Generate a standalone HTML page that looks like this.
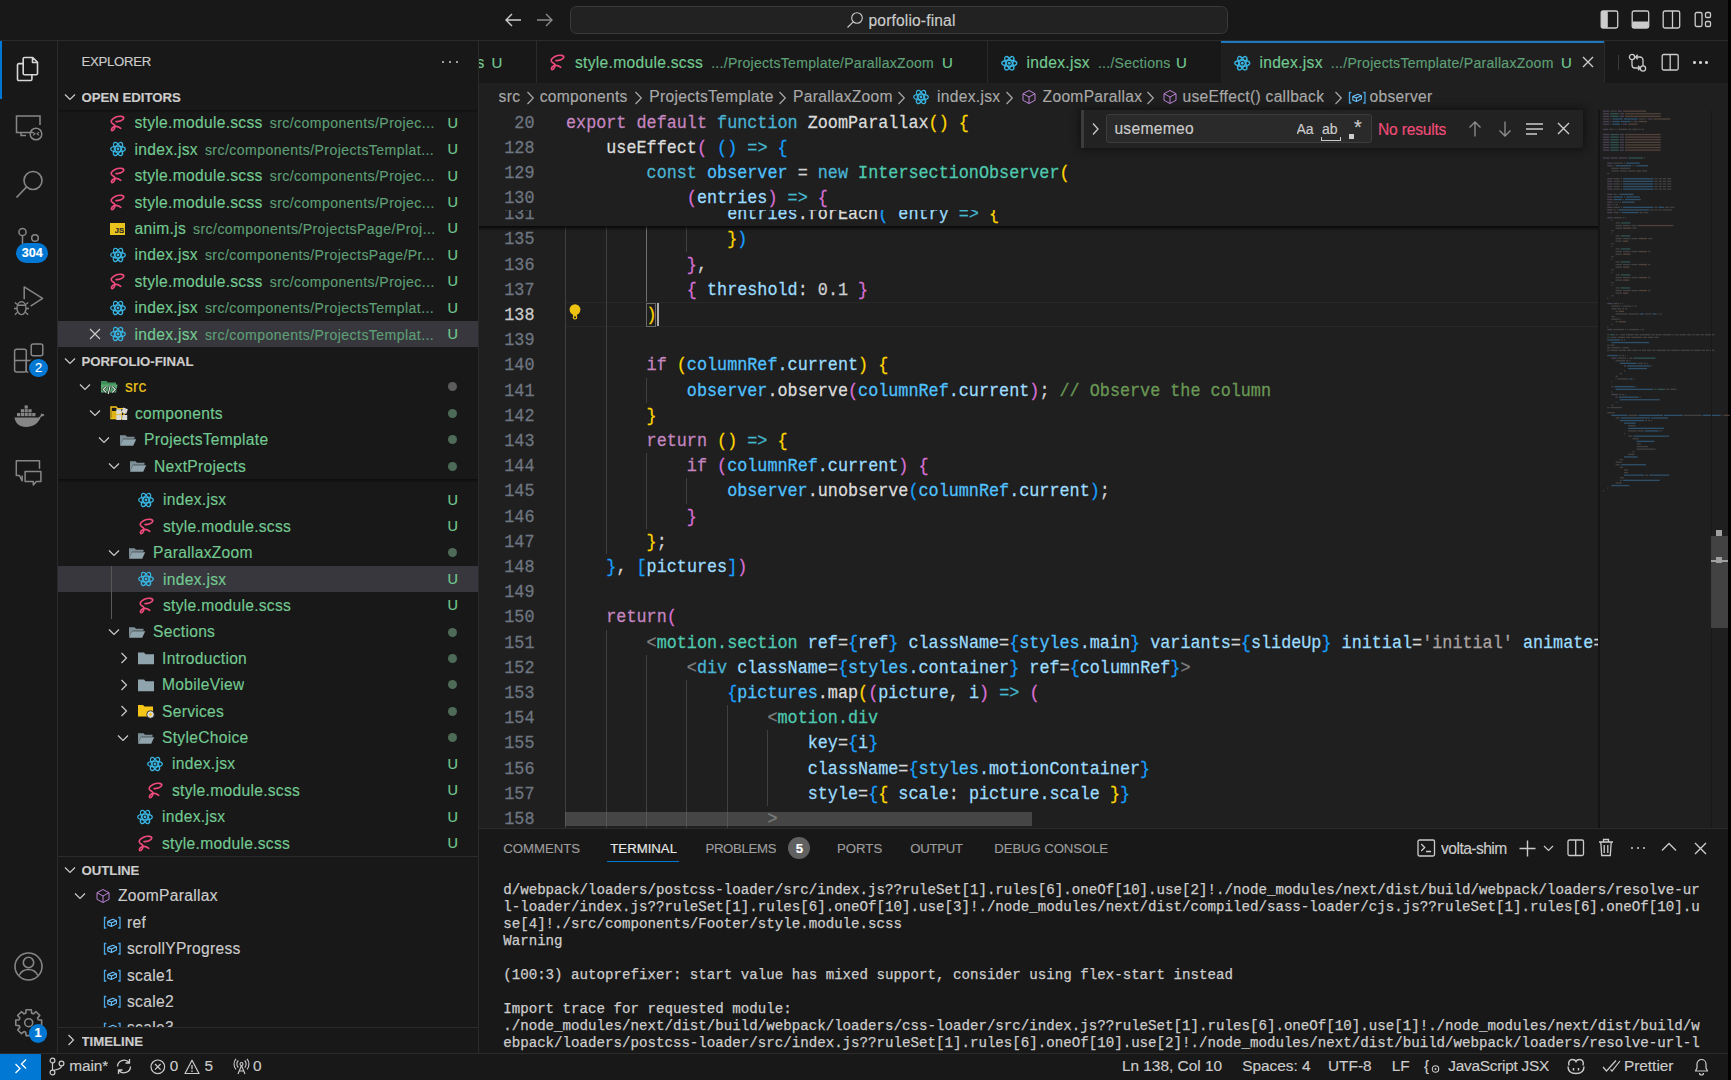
<!DOCTYPE html><html><head><meta charset="utf-8"><style>
*{margin:0;padding:0;box-sizing:border-box}
html,body{width:1731px;height:1080px;overflow:hidden;background:#181818}
body{position:relative;font-family:"Liberation Sans", sans-serif;color:#cccccc;font-size:15.6px;-webkit-text-stroke:0.15px currentColor}
.a{position:absolute}
.r{position:absolute;white-space:pre;overflow:hidden}
svg{position:absolute;overflow:visible;fill:none}
.m{font-family:"Liberation Mono", monospace;-webkit-text-stroke:0.25px currentColor}
</style></head><body>
<div class="a" style="left:0px;top:0px;width:1731px;height:41px;background:#181818;border-bottom:1px solid #2b2b2b"></div>
<div class="a" style="left:0px;top:41px;width:58px;height:1012px;background:#181818;border-right:1px solid #2b2b2b"></div>
<div class="a" style="left:58px;top:41px;width:421px;height:1012px;background:#181818;border-right:1px solid #2b2b2b"></div>
<div class="a" style="left:479px;top:41px;width:1249px;height:42px;background:#181818"></div>
<div class="a" style="left:479px;top:83px;width:1249px;height:745px;background:#1f1f1f"></div>
<div class="a" style="left:479px;top:828px;width:1249px;height:225px;background:#181818;border-top:1px solid #2b2b2b"></div>
<div class="a" style="left:0px;top:1053px;width:1728px;height:27px;background:#181818;border-top:1px solid #2b2b2b"></div>
<div class="a" style="left:1728px;top:0px;width:3px;height:1080px;background:#000"></div>
<div class="r" style="left:81.5px;top:41.3px;height:42px;line-height:42px;font-size:13.2px;color:#cccccc;letter-spacing:-0.3px">EXPLORER</div>
<div class="a" style="left:441.8px;top:61px;width:2.4px;height:2.4px;background:#cccccc;border-radius:50%"></div>
<div class="a" style="left:448.8px;top:61px;width:2.4px;height:2.4px;background:#cccccc;border-radius:50%"></div>
<div class="a" style="left:455.8px;top:61px;width:2.4px;height:2.4px;background:#cccccc;border-radius:50%"></div>
<svg style="left:64px;top:92.5px" width="12" height="8" viewBox="0 0 12 8"><path d="M1 1.5l5 5 5-5" stroke="#cccccc" stroke-width="1.2" fill="none"/></svg>
<div class="r" style="left:81.5px;top:85.3px;height:26.4px;line-height:26.4px;font-size:13.2px;color:#cccccc;font-weight:bold">OPEN EDITORS</div>
<svg style="left:110.0px;top:114.6px" width="15" height="17" viewBox="0 0 15 17"><path d="M6 6.6C9 6.8 13.5 5.5 13.8 3.2 14 1.2 10 .8 7.5 1.6 4 2.6.8 5 1.2 6.8 1.6 8.6 4.8 9.4 5 11 5.2 12.8 3.5 15.8 2 15.6.8 15.4 1.5 13 3.5 12 5.5 11 8.5 11.5 10.8 13.3" stroke="#ee4a7c" stroke-width="1.6" fill="none" stroke-linecap="round"/></svg>
<div class="r" style="left:134.5px;top:110.29999999999998px;height:26.4px;line-height:26.4px;width:310px;letter-spacing:0.3px"><span style="color:#73c991">style.module.scss</span><span style="color:#5e9f76;font-size:14.04px;margin-left:7px;letter-spacing:0.45px">src/components/Projec...</span></div>
<div class="r" style="left:447.5px;top:109.69999999999999px;height:26.4px;line-height:26.4px;font-size:14.5px;color:#73c991;">U</div>
<svg style="left:109.5px;top:141.29999999999998px" width="16" height="16" viewBox="0 0 16 16"><g stroke="#38b3e0" stroke-width="1.3" fill="none"><ellipse cx="8" cy="8" rx="7.3" ry="2.9"/><ellipse cx="8" cy="8" rx="7.3" ry="2.9" transform="rotate(60 8 8)"/><ellipse cx="8" cy="8" rx="7.3" ry="2.9" transform="rotate(120 8 8)"/></g><circle cx="8" cy="8" r="1.4" fill="#38b3e0"/></svg>
<div class="r" style="left:134.5px;top:136.7px;height:26.4px;line-height:26.4px;width:310px;letter-spacing:0.3px"><span style="color:#73c991">index.jsx</span><span style="color:#5e9f76;font-size:14.04px;margin-left:7px;letter-spacing:0.45px">src/components/ProjectsTemplat...</span></div>
<div class="r" style="left:447.5px;top:136.1px;height:26.4px;line-height:26.4px;font-size:14.5px;color:#73c991;">U</div>
<svg style="left:110.0px;top:167.39999999999998px" width="15" height="17" viewBox="0 0 15 17"><path d="M6 6.6C9 6.8 13.5 5.5 13.8 3.2 14 1.2 10 .8 7.5 1.6 4 2.6.8 5 1.2 6.8 1.6 8.6 4.8 9.4 5 11 5.2 12.8 3.5 15.8 2 15.6.8 15.4 1.5 13 3.5 12 5.5 11 8.5 11.5 10.8 13.3" stroke="#ee4a7c" stroke-width="1.6" fill="none" stroke-linecap="round"/></svg>
<div class="r" style="left:134.5px;top:163.1px;height:26.4px;line-height:26.4px;width:310px;letter-spacing:0.3px"><span style="color:#73c991">style.module.scss</span><span style="color:#5e9f76;font-size:14.04px;margin-left:7px;letter-spacing:0.45px">src/components/Projec...</span></div>
<div class="r" style="left:447.5px;top:162.5px;height:26.4px;line-height:26.4px;font-size:14.5px;color:#73c991;">U</div>
<svg style="left:110.0px;top:193.79999999999998px" width="15" height="17" viewBox="0 0 15 17"><path d="M6 6.6C9 6.8 13.5 5.5 13.8 3.2 14 1.2 10 .8 7.5 1.6 4 2.6.8 5 1.2 6.8 1.6 8.6 4.8 9.4 5 11 5.2 12.8 3.5 15.8 2 15.6.8 15.4 1.5 13 3.5 12 5.5 11 8.5 11.5 10.8 13.3" stroke="#ee4a7c" stroke-width="1.6" fill="none" stroke-linecap="round"/></svg>
<div class="r" style="left:134.5px;top:189.5px;height:26.4px;line-height:26.4px;width:310px;letter-spacing:0.3px"><span style="color:#73c991">style.module.scss</span><span style="color:#5e9f76;font-size:14.04px;margin-left:7px;letter-spacing:0.45px">src/components/Projec...</span></div>
<div class="r" style="left:447.5px;top:188.9px;height:26.4px;line-height:26.4px;font-size:14.5px;color:#73c991;">U</div>
<div class="a" style="left:109.5px;top:223.0px;width:15px;height:12px;background:#e8c31c"></div>
<div class="r" style="left:114.5px;top:226.0px;height:9px;line-height:9px;font-size:8px;font-weight:bold;color:#2a2a2a">JS</div>
<div class="r" style="left:134.5px;top:215.9px;height:26.4px;line-height:26.4px;width:310px;letter-spacing:0.3px"><span style="color:#73c991">anim.js</span><span style="color:#5e9f76;font-size:14.04px;margin-left:7px;letter-spacing:0.45px">src/components/ProjectsPage/Proj...</span></div>
<div class="r" style="left:447.5px;top:215.3px;height:26.4px;line-height:26.4px;font-size:14.5px;color:#73c991;">U</div>
<svg style="left:109.5px;top:246.9px" width="16" height="16" viewBox="0 0 16 16"><g stroke="#38b3e0" stroke-width="1.3" fill="none"><ellipse cx="8" cy="8" rx="7.3" ry="2.9"/><ellipse cx="8" cy="8" rx="7.3" ry="2.9" transform="rotate(60 8 8)"/><ellipse cx="8" cy="8" rx="7.3" ry="2.9" transform="rotate(120 8 8)"/></g><circle cx="8" cy="8" r="1.4" fill="#38b3e0"/></svg>
<div class="r" style="left:134.5px;top:242.3px;height:26.4px;line-height:26.4px;width:310px;letter-spacing:0.3px"><span style="color:#73c991">index.jsx</span><span style="color:#5e9f76;font-size:14.04px;margin-left:7px;letter-spacing:0.45px">src/components/ProjectsPage/Pr...</span></div>
<div class="r" style="left:447.5px;top:241.70000000000002px;height:26.4px;line-height:26.4px;font-size:14.5px;color:#73c991;">U</div>
<svg style="left:110.0px;top:273.0px" width="15" height="17" viewBox="0 0 15 17"><path d="M6 6.6C9 6.8 13.5 5.5 13.8 3.2 14 1.2 10 .8 7.5 1.6 4 2.6.8 5 1.2 6.8 1.6 8.6 4.8 9.4 5 11 5.2 12.8 3.5 15.8 2 15.6.8 15.4 1.5 13 3.5 12 5.5 11 8.5 11.5 10.8 13.3" stroke="#ee4a7c" stroke-width="1.6" fill="none" stroke-linecap="round"/></svg>
<div class="r" style="left:134.5px;top:268.70000000000005px;height:26.4px;line-height:26.4px;width:310px;letter-spacing:0.3px"><span style="color:#73c991">style.module.scss</span><span style="color:#5e9f76;font-size:14.04px;margin-left:7px;letter-spacing:0.45px">src/components/Projec...</span></div>
<div class="r" style="left:447.5px;top:268.1px;height:26.4px;line-height:26.4px;font-size:14.5px;color:#73c991;">U</div>
<svg style="left:109.5px;top:299.7px" width="16" height="16" viewBox="0 0 16 16"><g stroke="#38b3e0" stroke-width="1.3" fill="none"><ellipse cx="8" cy="8" rx="7.3" ry="2.9"/><ellipse cx="8" cy="8" rx="7.3" ry="2.9" transform="rotate(60 8 8)"/><ellipse cx="8" cy="8" rx="7.3" ry="2.9" transform="rotate(120 8 8)"/></g><circle cx="8" cy="8" r="1.4" fill="#38b3e0"/></svg>
<div class="r" style="left:134.5px;top:295.1px;height:26.4px;line-height:26.4px;width:310px;letter-spacing:0.3px"><span style="color:#73c991">index.jsx</span><span style="color:#5e9f76;font-size:14.04px;margin-left:7px;letter-spacing:0.45px">src/components/ProjectsTemplat...</span></div>
<div class="r" style="left:447.5px;top:294.5px;height:26.4px;line-height:26.4px;font-size:14.5px;color:#73c991;">U</div>
<div class="a" style="left:58px;top:320.9px;width:420px;height:26.4px;background:#37373d"></div>
<svg style="left:89px;top:328.09999999999997px" width="12" height="12" viewBox="0 0 12 12"><path d="M1 1l10 10M11 1L1 11" stroke="#cccccc" stroke-width="1.2"/></svg>
<svg style="left:109.5px;top:326.09999999999997px" width="16" height="16" viewBox="0 0 16 16"><g stroke="#38b3e0" stroke-width="1.3" fill="none"><ellipse cx="8" cy="8" rx="7.3" ry="2.9"/><ellipse cx="8" cy="8" rx="7.3" ry="2.9" transform="rotate(60 8 8)"/><ellipse cx="8" cy="8" rx="7.3" ry="2.9" transform="rotate(120 8 8)"/></g><circle cx="8" cy="8" r="1.4" fill="#38b3e0"/></svg>
<div class="r" style="left:134.5px;top:321.5px;height:26.4px;line-height:26.4px;width:310px;letter-spacing:0.3px"><span style="color:#73c991">index.jsx</span><span style="color:#5e9f76;font-size:14.04px;margin-left:7px;letter-spacing:0.45px">src/components/ProjectsTemplat...</span></div>
<div class="r" style="left:447.5px;top:320.9px;height:26.4px;line-height:26.4px;font-size:14.5px;color:#73c991;">U</div>
<svg style="left:64px;top:356.49999999999994px" width="12" height="8" viewBox="0 0 12 8"><path d="M1 1.5l5 5 5-5" stroke="#cccccc" stroke-width="1.2" fill="none"/></svg>
<div class="r" style="left:81.5px;top:349.29999999999995px;height:26.4px;line-height:26.4px;font-size:13.2px;color:#cccccc;font-weight:bold">PORFOLIO-FINAL</div>
<svg style="left:79px;top:382.8999999999999px" width="12" height="8" viewBox="0 0 12 8"><path d="M1 1.5l5 5 5-5" stroke="#cccccc" stroke-width="1.2" fill="none"/></svg>
<svg style="left:99.5px;top:380.3999999999999px" width="19" height="15" viewBox="0 0 19 15"><path d="M1 1h5.5l1.5 1.6H16v3H1z" fill="#3f8f5a"/><path d="M1 4.5h16.5L16 12.5H1z" fill="#5aaa72"/><path d="M6.3 6.5L3.2 9.5l3.1 3M12.2 6.5l3.1 3-3.1 3M10.2 5.5L8.2 14" stroke="#181818" stroke-width="2.4" fill="none"/><path d="M6.3 6.5L3.2 9.5l3.1 3M12.2 6.5l3.1 3-3.1 3M10.2 5.5L8.2 14" stroke="#d6eedd" stroke-width="1.1" fill="none"/></svg>
<div class="r" style="left:125px;top:374.29999999999995px;height:26.4px;line-height:26.4px;font-size:15.6px;color:#ecc21a;letter-spacing:0.3px">src</div>
<div class="a" style="left:447.5px;top:382.3999999999999px;width:9px;height:9px;background:#5c5c5c;border-radius:50%"></div>
<svg style="left:89px;top:409.2999999999999px" width="12" height="8" viewBox="0 0 12 8"><path d="M1 1.5l5 5 5-5" stroke="#cccccc" stroke-width="1.2" fill="none"/></svg>
<svg style="left:109.5px;top:406.2999999999999px" width="19" height="15" viewBox="0 0 19 15"><path d="M1 1h5l1.5 1.6H14v10H1z" fill="none" stroke="#f5c518" stroke-width="1.4"/><path d="M2 5h10v7H2z" fill="#f5c518" opacity=".9"/><rect x="6.3" y="3.2" width="5" height="5" fill="#d9d9d9"/><rect x="12.2" y="2.2" width="5" height="5" fill="#d9d9d9" transform="rotate(20 14.7 4.7)"/><rect x="6.3" y="9" width="5" height="5" fill="#d9d9d9"/><rect x="12.2" y="9" width="5" height="5" fill="#d9d9d9"/></svg>
<div class="r" style="left:135px;top:400.69999999999993px;height:26.4px;line-height:26.4px;font-size:15.6px;color:#73c991;letter-spacing:0.3px">components</div>
<div class="a" style="left:447.5px;top:408.7999999999999px;width:9px;height:9px;background:#4d6b57;border-radius:50%"></div>
<svg style="left:98px;top:435.6999999999999px" width="12" height="8" viewBox="0 0 12 8"><path d="M1 1.5l5 5 5-5" stroke="#cccccc" stroke-width="1.2" fill="none"/></svg>
<svg style="left:119px;top:432.6999999999999px" width="18" height="14" viewBox="0 0 18 14"><path d="M1 2.2h5.5l1.5 1.6h7.5v2H4.2L1 12.5z" fill="#90a4ae" opacity=".85"/><path d="M4 6.2h13.2l-3 6.6H1z" fill="#90a4ae"/></svg>
<div class="r" style="left:144px;top:427.0999999999999px;height:26.4px;line-height:26.4px;font-size:15.6px;color:#73c991;letter-spacing:0.3px">ProjectsTemplate</div>
<div class="a" style="left:447.5px;top:435.1999999999999px;width:9px;height:9px;background:#4d6b57;border-radius:50%"></div>
<svg style="left:108px;top:462.09999999999985px" width="12" height="8" viewBox="0 0 12 8"><path d="M1 1.5l5 5 5-5" stroke="#cccccc" stroke-width="1.2" fill="none"/></svg>
<svg style="left:129px;top:459.09999999999985px" width="18" height="14" viewBox="0 0 18 14"><path d="M1 2.2h5.5l1.5 1.6h7.5v2H4.2L1 12.5z" fill="#90a4ae" opacity=".85"/><path d="M4 6.2h13.2l-3 6.6H1z" fill="#90a4ae"/></svg>
<div class="r" style="left:154px;top:453.4999999999999px;height:26.4px;line-height:26.4px;font-size:15.6px;color:#73c991;letter-spacing:0.3px">NextProjects</div>
<div class="a" style="left:447.5px;top:461.59999999999985px;width:9px;height:9px;background:#4d6b57;border-radius:50%"></div>
<div class="a" style="left:58px;top:479px;width:420px;height:4px;background:linear-gradient(#0d0d0d,rgba(24,24,24,0))"></div>
<svg style="left:138px;top:492.0px" width="16" height="16" viewBox="0 0 16 16"><g stroke="#38b3e0" stroke-width="1.3" fill="none"><ellipse cx="8" cy="8" rx="7.3" ry="2.9"/><ellipse cx="8" cy="8" rx="7.3" ry="2.9" transform="rotate(60 8 8)"/><ellipse cx="8" cy="8" rx="7.3" ry="2.9" transform="rotate(120 8 8)"/></g><circle cx="8" cy="8" r="1.4" fill="#38b3e0"/></svg>
<div class="r" style="left:163px;top:487.40000000000003px;height:26.4px;line-height:26.4px;font-size:15.6px;color:#73c991;letter-spacing:0.3px">index.jsx</div>
<div class="r" style="left:447.5px;top:486.8px;height:26.4px;line-height:26.4px;font-size:14.5px;color:#73c991;">U</div>
<svg style="left:138.5px;top:518.1000000000001px" width="15" height="17" viewBox="0 0 15 17"><path d="M6 6.6C9 6.8 13.5 5.5 13.8 3.2 14 1.2 10 .8 7.5 1.6 4 2.6.8 5 1.2 6.8 1.6 8.6 4.8 9.4 5 11 5.2 12.8 3.5 15.8 2 15.6.8 15.4 1.5 13 3.5 12 5.5 11 8.5 11.5 10.8 13.3" stroke="#ee4a7c" stroke-width="1.6" fill="none" stroke-linecap="round"/></svg>
<div class="r" style="left:163px;top:513.8000000000001px;height:26.4px;line-height:26.4px;font-size:15.6px;color:#73c991;letter-spacing:0.3px">style.module.scss</div>
<div class="r" style="left:447.5px;top:513.2px;height:26.4px;line-height:26.4px;font-size:14.5px;color:#73c991;">U</div>
<svg style="left:108px;top:548.8000000000001px" width="12" height="8" viewBox="0 0 12 8"><path d="M1 1.5l5 5 5-5" stroke="#cccccc" stroke-width="1.2" fill="none"/></svg>
<svg style="left:128px;top:545.8000000000001px" width="18" height="14" viewBox="0 0 18 14"><path d="M1 2.2h5.5l1.5 1.6h7.5v2H4.2L1 12.5z" fill="#90a4ae" opacity=".85"/><path d="M4 6.2h13.2l-3 6.6H1z" fill="#90a4ae"/></svg>
<div class="r" style="left:153px;top:540.2px;height:26.4px;line-height:26.4px;font-size:15.6px;color:#73c991;letter-spacing:0.3px">ParallaxZoom</div>
<div class="a" style="left:447.5px;top:548.3000000000001px;width:9px;height:9px;background:#4d6b57;border-radius:50%"></div>
<div class="a" style="left:58px;top:566.0px;width:420px;height:26.4px;background:#37373d"></div>
<svg style="left:138px;top:571.2px" width="16" height="16" viewBox="0 0 16 16"><g stroke="#38b3e0" stroke-width="1.3" fill="none"><ellipse cx="8" cy="8" rx="7.3" ry="2.9"/><ellipse cx="8" cy="8" rx="7.3" ry="2.9" transform="rotate(60 8 8)"/><ellipse cx="8" cy="8" rx="7.3" ry="2.9" transform="rotate(120 8 8)"/></g><circle cx="8" cy="8" r="1.4" fill="#38b3e0"/></svg>
<div class="r" style="left:163px;top:566.6px;height:26.4px;line-height:26.4px;font-size:15.6px;color:#73c991;letter-spacing:0.3px">index.jsx</div>
<div class="r" style="left:447.5px;top:566.0px;height:26.4px;line-height:26.4px;font-size:14.5px;color:#73c991;">U</div>
<svg style="left:138.5px;top:597.3000000000001px" width="15" height="17" viewBox="0 0 15 17"><path d="M6 6.6C9 6.8 13.5 5.5 13.8 3.2 14 1.2 10 .8 7.5 1.6 4 2.6.8 5 1.2 6.8 1.6 8.6 4.8 9.4 5 11 5.2 12.8 3.5 15.8 2 15.6.8 15.4 1.5 13 3.5 12 5.5 11 8.5 11.5 10.8 13.3" stroke="#ee4a7c" stroke-width="1.6" fill="none" stroke-linecap="round"/></svg>
<div class="r" style="left:163px;top:593.0px;height:26.4px;line-height:26.4px;font-size:15.6px;color:#73c991;letter-spacing:0.3px">style.module.scss</div>
<div class="r" style="left:447.5px;top:592.4px;height:26.4px;line-height:26.4px;font-size:14.5px;color:#73c991;">U</div>
<svg style="left:108px;top:628.0px" width="12" height="8" viewBox="0 0 12 8"><path d="M1 1.5l5 5 5-5" stroke="#cccccc" stroke-width="1.2" fill="none"/></svg>
<svg style="left:128px;top:625.0px" width="18" height="14" viewBox="0 0 18 14"><path d="M1 2.2h5.5l1.5 1.6h7.5v2H4.2L1 12.5z" fill="#90a4ae" opacity=".85"/><path d="M4 6.2h13.2l-3 6.6H1z" fill="#90a4ae"/></svg>
<div class="r" style="left:153px;top:619.4px;height:26.4px;line-height:26.4px;font-size:15.6px;color:#73c991;letter-spacing:0.3px">Sections</div>
<div class="a" style="left:447.5px;top:627.5px;width:9px;height:9px;background:#4d6b57;border-radius:50%"></div>
<svg style="left:120px;top:652.4px" width="8" height="12" viewBox="0 0 8 12"><path d="M1.5 1l5 5-5 5" stroke="#cccccc" stroke-width="1.2" fill="none"/></svg>
<svg style="left:137px;top:651.4px" width="18" height="14" viewBox="0 0 18 14"><path d="M1 1.5h6l1.6 1.8H17v10H1z" fill="#90a4ae"/></svg>
<div class="r" style="left:162px;top:645.8px;height:26.4px;line-height:26.4px;font-size:15.6px;color:#73c991;letter-spacing:0.3px">Introduction</div>
<div class="a" style="left:447.5px;top:653.9px;width:9px;height:9px;background:#4d6b57;border-radius:50%"></div>
<svg style="left:120px;top:678.8px" width="8" height="12" viewBox="0 0 8 12"><path d="M1.5 1l5 5-5 5" stroke="#cccccc" stroke-width="1.2" fill="none"/></svg>
<svg style="left:137px;top:677.8px" width="18" height="14" viewBox="0 0 18 14"><path d="M1 1.5h6l1.6 1.8H17v10H1z" fill="#90a4ae"/></svg>
<div class="r" style="left:162px;top:672.1999999999999px;height:26.4px;line-height:26.4px;font-size:15.6px;color:#73c991;letter-spacing:0.3px">MobileView</div>
<div class="a" style="left:447.5px;top:680.3px;width:9px;height:9px;background:#4d6b57;border-radius:50%"></div>
<svg style="left:120px;top:705.1999999999999px" width="8" height="12" viewBox="0 0 8 12"><path d="M1.5 1l5 5-5 5" stroke="#cccccc" stroke-width="1.2" fill="none"/></svg>
<svg style="left:137px;top:704.1999999999999px" width="19" height="15" viewBox="0 0 19 15"><path d="M1 1h5l1.5 1.6H16v10H1z" fill="#f5c518"/><circle cx="13.5" cy="10.5" r="3.8" fill="#d9d9d9" stroke="#181818" stroke-width=".8"/><circle cx="13.5" cy="10.5" r="1.4" fill="#f5c518"/></svg>
<div class="r" style="left:162px;top:698.5999999999999px;height:26.4px;line-height:26.4px;font-size:15.6px;color:#73c991;letter-spacing:0.3px">Services</div>
<div class="a" style="left:447.5px;top:706.6999999999999px;width:9px;height:9px;background:#4d6b57;border-radius:50%"></div>
<svg style="left:117px;top:733.5999999999999px" width="12" height="8" viewBox="0 0 12 8"><path d="M1 1.5l5 5 5-5" stroke="#cccccc" stroke-width="1.2" fill="none"/></svg>
<svg style="left:137px;top:730.5999999999999px" width="18" height="14" viewBox="0 0 18 14"><path d="M1 2.2h5.5l1.5 1.6h7.5v2H4.2L1 12.5z" fill="#90a4ae" opacity=".85"/><path d="M4 6.2h13.2l-3 6.6H1z" fill="#90a4ae"/></svg>
<div class="r" style="left:162px;top:724.9999999999999px;height:26.4px;line-height:26.4px;font-size:15.6px;color:#73c991;letter-spacing:0.3px">StyleChoice</div>
<div class="a" style="left:447.5px;top:733.0999999999999px;width:9px;height:9px;background:#4d6b57;border-radius:50%"></div>
<svg style="left:147px;top:755.9999999999999px" width="16" height="16" viewBox="0 0 16 16"><g stroke="#38b3e0" stroke-width="1.3" fill="none"><ellipse cx="8" cy="8" rx="7.3" ry="2.9"/><ellipse cx="8" cy="8" rx="7.3" ry="2.9" transform="rotate(60 8 8)"/><ellipse cx="8" cy="8" rx="7.3" ry="2.9" transform="rotate(120 8 8)"/></g><circle cx="8" cy="8" r="1.4" fill="#38b3e0"/></svg>
<div class="r" style="left:172px;top:751.3999999999999px;height:26.4px;line-height:26.4px;font-size:15.6px;color:#73c991;letter-spacing:0.3px">index.jsx</div>
<div class="r" style="left:447.5px;top:750.7999999999998px;height:26.4px;line-height:26.4px;font-size:14.5px;color:#73c991;">U</div>
<svg style="left:147.5px;top:782.0999999999999px" width="15" height="17" viewBox="0 0 15 17"><path d="M6 6.6C9 6.8 13.5 5.5 13.8 3.2 14 1.2 10 .8 7.5 1.6 4 2.6.8 5 1.2 6.8 1.6 8.6 4.8 9.4 5 11 5.2 12.8 3.5 15.8 2 15.6.8 15.4 1.5 13 3.5 12 5.5 11 8.5 11.5 10.8 13.3" stroke="#ee4a7c" stroke-width="1.6" fill="none" stroke-linecap="round"/></svg>
<div class="r" style="left:172px;top:777.7999999999998px;height:26.4px;line-height:26.4px;font-size:15.6px;color:#73c991;letter-spacing:0.3px">style.module.scss</div>
<div class="r" style="left:447.5px;top:777.1999999999998px;height:26.4px;line-height:26.4px;font-size:14.5px;color:#73c991;">U</div>
<svg style="left:137px;top:808.7999999999998px" width="16" height="16" viewBox="0 0 16 16"><g stroke="#38b3e0" stroke-width="1.3" fill="none"><ellipse cx="8" cy="8" rx="7.3" ry="2.9"/><ellipse cx="8" cy="8" rx="7.3" ry="2.9" transform="rotate(60 8 8)"/><ellipse cx="8" cy="8" rx="7.3" ry="2.9" transform="rotate(120 8 8)"/></g><circle cx="8" cy="8" r="1.4" fill="#38b3e0"/></svg>
<div class="r" style="left:162px;top:804.1999999999998px;height:26.4px;line-height:26.4px;font-size:15.6px;color:#73c991;letter-spacing:0.3px">index.jsx</div>
<div class="r" style="left:447.5px;top:803.5999999999998px;height:26.4px;line-height:26.4px;font-size:14.5px;color:#73c991;">U</div>
<svg style="left:137.5px;top:834.8999999999999px" width="15" height="17" viewBox="0 0 15 17"><path d="M6 6.6C9 6.8 13.5 5.5 13.8 3.2 14 1.2 10 .8 7.5 1.6 4 2.6.8 5 1.2 6.8 1.6 8.6 4.8 9.4 5 11 5.2 12.8 3.5 15.8 2 15.6.8 15.4 1.5 13 3.5 12 5.5 11 8.5 11.5 10.8 13.3" stroke="#ee4a7c" stroke-width="1.6" fill="none" stroke-linecap="round"/></svg>
<div class="r" style="left:162px;top:830.5999999999998px;height:26.4px;line-height:26.4px;font-size:15.6px;color:#73c991;letter-spacing:0.3px">style.module.scss</div>
<div class="r" style="left:447.5px;top:829.9999999999998px;height:26.4px;line-height:26.4px;font-size:14.5px;color:#73c991;">U</div>
<div class="a" style="left:110.5px;top:566px;width:1px;height:53px;background:#585858"></div>
<div class="a" style="left:58px;top:856.4px;width:420px;height:1px;background:#2b2b2b"></div>
<svg style="left:64px;top:865.6px" width="12" height="8" viewBox="0 0 12 8"><path d="M1 1.5l5 5 5-5" stroke="#cccccc" stroke-width="1.2" fill="none"/></svg>
<div class="r" style="left:81.5px;top:858.4px;height:26.4px;line-height:26.4px;font-size:13.2px;color:#cccccc;font-weight:bold">OUTLINE</div>
<svg style="left:74px;top:892.0px" width="12" height="8" viewBox="0 0 12 8"><path d="M1 1.5l5 5 5-5" stroke="#cccccc" stroke-width="1.2" fill="none"/></svg>
<svg style="left:95px;top:888.0px" width="16" height="16" viewBox="0 0 16 16"><path d="M8 1.5l6 3.2v6.6L8 14.5 2 11.3V4.7z M2 4.7l6 3.3 6-3.3 M8 8v6.5" stroke="#c488e0" stroke-width="0.95" fill="none" stroke-linejoin="round"/></svg>
<div class="r" style="left:118px;top:883.4px;height:26.4px;line-height:26.4px;font-size:15.6px;color:#cccccc;letter-spacing:0.3px">ZoomParallax</div>
<svg style="left:103px;top:913.9px" width="18.5" height="17" viewBox="0 0 18.5 17"><path d="M3.3 3.5H1.5v10.5h1.8M15.2 3.5H17v10.5h-1.8" stroke="#4aa8e8" stroke-width="1.3" fill="none"/><path d="M4.8 7.6l5-2.3 3.6 1.4v3.4l-5 2.3-3.6-1.4z M4.8 7.6l3.6 1.5 5-2.4 M8.4 9.1v3.4" stroke="#6cc4ff" stroke-width="1.1" fill="none" stroke-linejoin="round"/></svg>
<div class="r" style="left:127px;top:909.8px;height:26.4px;line-height:26.4px;font-size:15.6px;color:#cccccc;letter-spacing:0.3px">ref</div>
<svg style="left:103px;top:940.3px" width="18.5" height="17" viewBox="0 0 18.5 17"><path d="M3.3 3.5H1.5v10.5h1.8M15.2 3.5H17v10.5h-1.8" stroke="#4aa8e8" stroke-width="1.3" fill="none"/><path d="M4.8 7.6l5-2.3 3.6 1.4v3.4l-5 2.3-3.6-1.4z M4.8 7.6l3.6 1.5 5-2.4 M8.4 9.1v3.4" stroke="#6cc4ff" stroke-width="1.1" fill="none" stroke-linejoin="round"/></svg>
<div class="r" style="left:127px;top:936.1999999999999px;height:26.4px;line-height:26.4px;font-size:15.6px;color:#cccccc;letter-spacing:0.3px">scrollYProgress</div>
<svg style="left:103px;top:966.6999999999999px" width="18.5" height="17" viewBox="0 0 18.5 17"><path d="M3.3 3.5H1.5v10.5h1.8M15.2 3.5H17v10.5h-1.8" stroke="#4aa8e8" stroke-width="1.3" fill="none"/><path d="M4.8 7.6l5-2.3 3.6 1.4v3.4l-5 2.3-3.6-1.4z M4.8 7.6l3.6 1.5 5-2.4 M8.4 9.1v3.4" stroke="#6cc4ff" stroke-width="1.1" fill="none" stroke-linejoin="round"/></svg>
<div class="r" style="left:127px;top:962.5999999999999px;height:26.4px;line-height:26.4px;font-size:15.6px;color:#cccccc;letter-spacing:0.3px">scale1</div>
<svg style="left:103px;top:993.0999999999999px" width="18.5" height="17" viewBox="0 0 18.5 17"><path d="M3.3 3.5H1.5v10.5h1.8M15.2 3.5H17v10.5h-1.8" stroke="#4aa8e8" stroke-width="1.3" fill="none"/><path d="M4.8 7.6l5-2.3 3.6 1.4v3.4l-5 2.3-3.6-1.4z M4.8 7.6l3.6 1.5 5-2.4 M8.4 9.1v3.4" stroke="#6cc4ff" stroke-width="1.1" fill="none" stroke-linejoin="round"/></svg>
<div class="r" style="left:127px;top:988.9999999999999px;height:26.4px;line-height:26.4px;font-size:15.6px;color:#cccccc;letter-spacing:0.3px">scale2</div>
<svg style="left:103px;top:1019.4999999999998px" width="18.5" height="17" viewBox="0 0 18.5 17"><path d="M3.3 3.5H1.5v10.5h1.8M15.2 3.5H17v10.5h-1.8" stroke="#4aa8e8" stroke-width="1.3" fill="none"/><path d="M4.8 7.6l5-2.3 3.6 1.4v3.4l-5 2.3-3.6-1.4z M4.8 7.6l3.6 1.5 5-2.4 M8.4 9.1v3.4" stroke="#6cc4ff" stroke-width="1.1" fill="none" stroke-linejoin="round"/></svg>
<div class="r" style="left:127px;top:1015.3999999999996px;height:26.4px;line-height:26.4px;font-size:15.6px;color:#cccccc;letter-spacing:0.3px">scale3</div>
<div class="a" style="left:58px;top:1027px;width:420px;height:26.4px;background:#181818"></div>
<div class="a" style="left:58px;top:1027px;width:420px;height:1px;background:#2b2b2b"></div>
<svg style="left:67px;top:1034.2px" width="8" height="12" viewBox="0 0 8 12"><path d="M1.5 1l5 5-5 5" stroke="#cccccc" stroke-width="1.2" fill="none"/></svg>
<div class="r" style="left:81.5px;top:1029.0px;height:26.4px;line-height:26.4px;font-size:13.2px;color:#cccccc;font-weight:bold">TIMELINE</div>
<div class="a" style="left:0px;top:41.3px;width:2.2px;height:57.4px;background:#0078d4"></div>
<svg style="left:15px;top:55px" width="28" height="30" viewBox="0 0 28 30"><path d="M9.5 2.5h8.2l4.8 4.8v11.2a1.3 1.3 0 0 1-1.3 1.3h-11.7a1.3 1.3 0 0 1-1.3-1.3V3.8a1.3 1.3 0 0 1 1.3-1.3z M17.5 2.5v5h5" stroke="#d7d7d7" stroke-width="1.6" stroke-linejoin="round"/><path d="M8.2 8.6H3.8a1.3 1.3 0 0 0-1.3 1.3v14.3a1.3 1.3 0 0 0 1.3 1.3h11.8a1.3 1.3 0 0 0 1.3-1.3v-4.4" stroke="#d7d7d7" stroke-width="1.6" stroke-linejoin="round"/></svg>
<svg style="left:14px;top:114px" width="30" height="28" viewBox="0 0 30 28"><path d="M19 18.5H2.5V2H26v9" stroke="#868686" stroke-width="1.5"/><path d="M7 18.5v3h5" stroke="#868686" stroke-width="1.5"/><circle cx="22" cy="20" r="5.8" stroke="#868686" stroke-width="1.5"/><path d="M19 18.2l2 1.6-2 1.6M25 18.2l-2 1.6 2 1.6" stroke="#868686" stroke-width="1.1"/></svg>
<svg style="left:14px;top:169px" width="30" height="32" viewBox="0 0 30 32"><circle cx="19" cy="11.5" r="9" stroke="#868686" stroke-width="1.6"/><path d="M12.5 18L2.5 28.5" stroke="#868686" stroke-width="1.8"/></svg>
<svg style="left:14px;top:226px" width="30" height="22" viewBox="0 0 30 22"><circle cx="8.5" cy="6" r="3.6" stroke="#868686" stroke-width="1.5"/><circle cx="21" cy="12" r="3.3" stroke="#868686" stroke-width="1.5"/><path d="M8.5 9.6V22" stroke="#868686" stroke-width="1.5"/></svg>
<div class="a" style="left:16.3px;top:242.5px;width:31.7px;height:20.5px;background:#0078d4;border-radius:10.5px"></div>
<div class="r" style="left:16.3px;top:242.65px;height:20.5px;line-height:20.5px;font-size:12.6px;color:#ffffff;font-weight:bold;width:31.7px;text-align:center">304</div>
<svg style="left:13px;top:284px" width="32" height="32" viewBox="0 0 32 32"><path d="M11.2 15.3V2.9L29.6 14.4 17.6 22.2" stroke="#868686" stroke-width="1.5" stroke-linejoin="round"/><path d="M8.5 17.8c-2.5 0-4.5 2.6-4.5 6.2s2 6.6 4.5 6.6 4.5-3 4.5-6.6-2-6.2-4.5-6.2zM4.3 21.2h8.4" stroke="#868686" stroke-width="1.4"/><path d="M1.8 18.6l2.6 2M15.2 18.6l-2.6 2M1 24.5h3M13 24.5h3M1.8 30.8l2.8-2.6M15.2 30.8l-2.8-2.6" stroke="#868686" stroke-width="1.3"/></svg>
<svg style="left:13px;top:342px" width="34" height="34" viewBox="0 0 34 34"><rect x="1.6" y="7.3" width="11.7" height="22.8" rx="2" stroke="#868686" stroke-width="1.5"/><path d="M1.6 18.5H25V30.1H13.3M13.3 18.5V30.1" stroke="#868686" stroke-width="1.5" stroke-linejoin="round"/><rect x="18.2" y="2.1" width="11.6" height="11.7" rx="2" stroke="#868686" stroke-width="1.5"/></svg>
<div class="a" style="left:29.2px;top:358.5px;width:18.8px;height:18.8px;background:#0078d4;border-radius:50%;box-shadow:0 0 0 1.5px #181818"></div>
<div class="r" style="left:29.2px;top:359.0px;height:18.8px;line-height:18.8px;font-size:13px;color:#ffffff;width:18.8px;text-align:center">2</div>
<svg style="left:13px;top:402px" width="32" height="28" viewBox="0 0 32 28"><path d="M1.5 15.5h24c1.5-1 2.5-2.5 2.7-4 1.2.2 2.3.5 3.3 1.5-1 1-2.5 1.5-3.5 1.5C25.5 21.5 20 25 13 25 6.5 25 2.5 21.5 1.5 15.5z" fill="#868686"/><g fill="#868686"><rect x="4" y="11" width="3.2" height="3.2"/><rect x="7.8" y="11" width="3.2" height="3.2"/><rect x="11.6" y="11" width="3.2" height="3.2"/><rect x="15.4" y="11" width="3.2" height="3.2"/><rect x="19.2" y="11" width="3.2" height="3.2"/><rect x="7.8" y="7.2" width="3.2" height="3.2"/><rect x="11.6" y="7.2" width="3.2" height="3.2"/><rect x="15.4" y="7.2" width="3.2" height="3.2"/><rect x="11.6" y="3.4" width="3.2" height="3.2"/></g></svg>
<svg style="left:14px;top:458px" width="30" height="30" viewBox="0 0 30 30"><path d="M25.5 10.8V2.7H2.3V17.6h3.2l2.7 5.2V17.6" stroke="#868686" stroke-width="1.5" stroke-linejoin="round"/><path d="M11.1 13.4h15.8v10.2h-4.6l-3 3.4v-3.4h-8.2z" fill="#181818" stroke="#868686" stroke-width="1.5" stroke-linejoin="round"/></svg>
<svg style="left:13px;top:951px" width="32" height="32" viewBox="0 0 32 32"><circle cx="15.5" cy="15.5" r="13.5" stroke="#868686" stroke-width="1.6"/><circle cx="15.5" cy="11.5" r="5.2" stroke="#868686" stroke-width="1.6"/><path d="M6 24.5c2-4 5.5-6 9.5-6s7.5 2 9.5 6" stroke="#868686" stroke-width="1.6"/></svg>
<svg style="left:13px;top:1007px" width="32" height="32" viewBox="0 0 32 32"><polygon points="25.25,12.74 28.64,13.08 28.64,18.32 25.25,18.66 24.54,20.37 26.70,22.99 22.99,26.70 20.37,24.54 18.66,25.25 18.32,28.64 13.08,28.64 12.74,25.25 11.03,24.54 8.41,26.70 4.70,22.99 6.86,20.37 6.15,18.66 2.76,18.32 2.76,13.08 6.15,12.74 6.86,11.03 4.70,8.41 8.41,4.70 11.03,6.86 12.74,6.15 13.08,2.76 18.32,2.76 18.66,6.15 20.37,6.86 22.99,4.70 26.70,8.41 24.54,11.03" stroke="#868686" stroke-width="1.6" stroke-linejoin="round"/><circle cx="15.7" cy="15.7" r="4" stroke="#868686" stroke-width="1.6"/></svg>
<div class="a" style="left:28.5px;top:1024px;width:18.8px;height:18.8px;background:#0078d4;border-radius:50%"></div>
<div class="r" style="left:28.5px;top:1024.1999999999998px;height:18.8px;line-height:18.8px;font-size:12.6px;color:#ffffff;font-weight:bold;width:18.8px;text-align:center">1</div>
<svg style="left:504px;top:13px" width="18" height="14" viewBox="0 0 18 14"><path d="M17 7H2M8 1L2 7l6 6" stroke="#cccccc" stroke-width="1.4"/></svg>
<svg style="left:536px;top:13px" width="18" height="14" viewBox="0 0 18 14"><path d="M1 7h15M10 1l6 6-6 6" stroke="#8a8a8a" stroke-width="1.4"/></svg>
<div class="a" style="left:569.6px;top:6.1px;width:658.4px;height:27.7px;background:#222222;border:1px solid #3a3a3a;border-radius:6.5px"></div>
<svg style="left:846px;top:11px" width="18" height="18" viewBox="0 0 18 18"><circle cx="11" cy="7" r="5.3" stroke="#cccccc" stroke-width="1.1"/><path d="M7.2 10.8L1.5 16.5" stroke="#cccccc" stroke-width="1.1"/></svg>
<div class="r" style="left:868.5px;top:7.0px;height:28px;line-height:28px;font-size:15.6px;color:#cccccc;letter-spacing:0.15px">porfolio-final</div>
<svg style="left:1600px;top:10px" width="19" height="19" viewBox="0 0 19 19"><rect x="1.2" y="1" width="16.5" height="17" rx="1.8" stroke="#cccccc" stroke-width="1.3"/><rect x="1.2" y="1" width="6.6" height="17" rx="1" fill="#cccccc"/></svg>
<svg style="left:1631px;top:10px" width="19" height="19" viewBox="0 0 19 19"><rect x="1.2" y="1" width="16.5" height="17" rx="1.8" stroke="#cccccc" stroke-width="1.3"/><rect x="1.2" y="11.5" width="16.5" height="6.5" rx="1" fill="#cccccc"/></svg>
<svg style="left:1662px;top:10px" width="19" height="19" viewBox="0 0 19 19"><rect x="1.2" y="1" width="16.5" height="17" rx="1.8" stroke="#cccccc" stroke-width="1.3"/><path d="M10.5 1v17" stroke="#cccccc" stroke-width="1.3"/></svg>
<svg style="left:1694px;top:11px" width="18" height="18" viewBox="0 0 18 18"><rect x="1.2" y="1.5" width="6.8" height="14" rx="1.5" stroke="#cccccc" stroke-width="1.3"/><rect x="11.5" y="1.5" width="5" height="5" rx="1.3" stroke="#cccccc" stroke-width="1.3"/><rect x="11.5" y="10.5" width="5" height="5" rx="1.3" stroke="#cccccc" stroke-width="1.3"/></svg>
<div class="a" style="left:535.5px;top:41px;width:1px;height:42px;background:#2b2b2b"></div>
<div class="a" style="left:987.2px;top:41px;width:1px;height:42px;background:#2b2b2b"></div>
<div class="a" style="left:1220.5px;top:41px;width:1px;height:42px;background:#2b2b2b"></div>
<div class="a" style="left:1221.3px;top:41px;width:383px;height:42px;background:#1f1f1f"></div>
<div class="a" style="left:1221.3px;top:41px;width:383px;height:2px;background:#1c78c0"></div>
<div class="a" style="left:1604.3px;top:41px;width:1px;height:42px;background:#2b2b2b"></div>
<div class="r" style="left:479px;top:42.2px;height:42px;line-height:42px;width:56px"><span style="color:#73c991;margin-left:-2.6px;letter-spacing:0">s</span></div>
<div class="r" style="left:491.5px;top:42.2px;height:42px;line-height:42px;font-size:15px;color:#73c991;">U</div>
<svg style="left:549.5px;top:53.5px" width="15" height="17" viewBox="0 0 15 17"><path d="M6 6.6C9 6.8 13.5 5.5 13.8 3.2 14 1.2 10 .8 7.5 1.6 4 2.6.8 5 1.2 6.8 1.6 8.6 4.8 9.4 5 11 5.2 12.8 3.5 15.8 2 15.6.8 15.4 1.5 13 3.5 12 5.5 11 8.5 11.5 10.8 13.3" stroke="#ee4a7c" stroke-width="1.6" fill="none" stroke-linecap="round"/></svg>
<div class="r" style="left:575px;top:42.2px;height:42px;line-height:42px;letter-spacing:0.3px"><span style="color:#73c991">style.module.scss</span><span style="color:#5e9f76;font-size:14.04px;margin-left:8px;letter-spacing:0.28px">.../ProjectsTemplate/ParallaxZoom</span></div>
<div class="r" style="left:942px;top:42.2px;height:42px;line-height:42px;font-size:15px;color:#73c991;">U</div>
<svg style="left:1001px;top:54.5px" width="16.5" height="16.5" viewBox="0 0 16 16"><g stroke="#38b3e0" stroke-width="1.3" fill="none"><ellipse cx="8" cy="8" rx="7.3" ry="2.9"/><ellipse cx="8" cy="8" rx="7.3" ry="2.9" transform="rotate(60 8 8)"/><ellipse cx="8" cy="8" rx="7.3" ry="2.9" transform="rotate(120 8 8)"/></g><circle cx="8" cy="8" r="1.4" fill="#38b3e0"/></svg>
<div class="r" style="left:1026.5px;top:42.2px;height:42px;line-height:42px;letter-spacing:0.3px"><span style="color:#73c991">index.jsx</span><span style="color:#5e9f76;font-size:14.04px;margin-left:8px;letter-spacing:0.28px">.../Sections</span></div>
<div class="r" style="left:1176px;top:42.2px;height:42px;line-height:42px;font-size:15px;color:#73c991;">U</div>
<svg style="left:1234px;top:54.5px" width="16.5" height="16.5" viewBox="0 0 16 16"><g stroke="#38b3e0" stroke-width="1.3" fill="none"><ellipse cx="8" cy="8" rx="7.3" ry="2.9"/><ellipse cx="8" cy="8" rx="7.3" ry="2.9" transform="rotate(60 8 8)"/><ellipse cx="8" cy="8" rx="7.3" ry="2.9" transform="rotate(120 8 8)"/></g><circle cx="8" cy="8" r="1.4" fill="#38b3e0"/></svg>
<div class="r" style="left:1259.4px;top:42.2px;height:42px;line-height:42px;letter-spacing:0.3px"><span style="color:#73c991">index.jsx</span><span style="color:#5e9f76;font-size:14.04px;margin-left:8px;letter-spacing:0.28px">.../ProjectsTemplate/ParallaxZoom</span></div>
<div class="r" style="left:1561px;top:42.2px;height:42px;line-height:42px;font-size:15px;color:#73c991;">U</div>
<svg style="left:1582px;top:56px" width="12" height="12" viewBox="0 0 12 12"><path d="M1 1l10 10M11 1L1 11" stroke="#cccccc" stroke-width="1.4"/></svg>
<div class="a" style="left:1618px;top:55px;width:1px;height:15px;background:#3a3a3a"></div>
<svg style="left:1628px;top:53px" width="20" height="20" viewBox="0 0 20 20"><circle cx="4" cy="4" r="2.6" stroke="#cccccc" stroke-width="1.3"/><circle cx="15" cy="15.5" r="2.6" stroke="#cccccc" stroke-width="1.3"/><path d="M4 6.6v5.4a3 3 0 0 0 3 3h5.2M10 12.8l2.2 2.2-2.2 2.2M15 12.9V7a3 3 0 0 0-3-3H7.5M9.7 1.8L7.5 4l2.2 2.2" stroke="#cccccc" stroke-width="1.3"/></svg>
<svg style="left:1661px;top:53px" width="19" height="19" viewBox="0 0 19 19"><rect x="1.2" y="1.5" width="16" height="15.5" rx="1.5" stroke="#cccccc" stroke-width="1.3"/><path d="M9.2 1.5v15.5" stroke="#cccccc" stroke-width="1.3"/></svg>
<div class="a" style="left:1693.3px;top:61.3px;width:2.4px;height:2.4px;background:#cccccc;border-radius:50%"></div>
<div class="a" style="left:1699.3px;top:61.3px;width:2.4px;height:2.4px;background:#cccccc;border-radius:50%"></div>
<div class="a" style="left:1705.3px;top:61.3px;width:2.4px;height:2.4px;background:#cccccc;border-radius:50%"></div>
<div class="r" style="left:498.6px;top:84.1px;height:26.4px;line-height:26.4px;font-size:15.6px;color:#a9a9a9;letter-spacing:0.3px">src</div>
<svg style="left:526px;top:90.8px" width="9" height="14" viewBox="0 0 9 14"><path d="M1.5 1l5.8 6-5.8 6" stroke="#a9a9a9" stroke-width="1.2"/></svg>
<div class="r" style="left:539.7px;top:84.1px;height:26.4px;line-height:26.4px;font-size:15.6px;color:#a9a9a9;letter-spacing:0.3px">components</div>
<svg style="left:634px;top:90.8px" width="9" height="14" viewBox="0 0 9 14"><path d="M1.5 1l5.8 6-5.8 6" stroke="#a9a9a9" stroke-width="1.2"/></svg>
<div class="r" style="left:649.3px;top:84.1px;height:26.4px;line-height:26.4px;font-size:15.6px;color:#a9a9a9;letter-spacing:0.3px">ProjectsTemplate</div>
<svg style="left:778px;top:90.8px" width="9" height="14" viewBox="0 0 9 14"><path d="M1.5 1l5.8 6-5.8 6" stroke="#a9a9a9" stroke-width="1.2"/></svg>
<div class="r" style="left:793px;top:84.1px;height:26.4px;line-height:26.4px;font-size:15.6px;color:#a9a9a9;letter-spacing:0.3px">ParallaxZoom</div>
<svg style="left:897px;top:90.8px" width="9" height="14" viewBox="0 0 9 14"><path d="M1.5 1l5.8 6-5.8 6" stroke="#a9a9a9" stroke-width="1.2"/></svg>
<svg style="left:913px;top:89.3px" width="16" height="16" viewBox="0 0 16 16"><g stroke="#38b3e0" stroke-width="1.3" fill="none"><ellipse cx="8" cy="8" rx="7.3" ry="2.9"/><ellipse cx="8" cy="8" rx="7.3" ry="2.9" transform="rotate(60 8 8)"/><ellipse cx="8" cy="8" rx="7.3" ry="2.9" transform="rotate(120 8 8)"/></g><circle cx="8" cy="8" r="1.4" fill="#38b3e0"/></svg>
<div class="r" style="left:937px;top:84.1px;height:26.4px;line-height:26.4px;font-size:15.6px;color:#a9a9a9;letter-spacing:0.3px">index.jsx</div>
<svg style="left:1005px;top:90.8px" width="9" height="14" viewBox="0 0 9 14"><path d="M1.5 1l5.8 6-5.8 6" stroke="#a9a9a9" stroke-width="1.2"/></svg>
<svg style="left:1020.5px;top:89.3px" width="16" height="16" viewBox="0 0 16 16"><path d="M8 1.5l6 3.2v6.6L8 14.5 2 11.3V4.7z M2 4.7l6 3.3 6-3.3 M8 8v6.5" stroke="#c488e0" stroke-width="0.95" fill="none" stroke-linejoin="round"/></svg>
<div class="r" style="left:1042.6px;top:84.1px;height:26.4px;line-height:26.4px;font-size:15.6px;color:#a9a9a9;letter-spacing:0.3px">ZoomParallax</div>
<svg style="left:1146px;top:90.8px" width="9" height="14" viewBox="0 0 9 14"><path d="M1.5 1l5.8 6-5.8 6" stroke="#a9a9a9" stroke-width="1.2"/></svg>
<svg style="left:1161.5px;top:89.3px" width="16" height="16" viewBox="0 0 16 16"><path d="M8 1.5l6 3.2v6.6L8 14.5 2 11.3V4.7z M2 4.7l6 3.3 6-3.3 M8 8v6.5" stroke="#c488e0" stroke-width="0.95" fill="none" stroke-linejoin="round"/></svg>
<div class="r" style="left:1182.5px;top:84.1px;height:26.4px;line-height:26.4px;font-size:15.6px;color:#a9a9a9;letter-spacing:0.3px">useEffect() callback</div>
<svg style="left:1334px;top:90.8px" width="9" height="14" viewBox="0 0 9 14"><path d="M1.5 1l5.8 6-5.8 6" stroke="#a9a9a9" stroke-width="1.2"/></svg>
<svg style="left:1348px;top:88.8px" width="18.5" height="17" viewBox="0 0 18.5 17"><path d="M3.3 3.5H1.5v10.5h1.8M15.2 3.5H17v10.5h-1.8" stroke="#4aa8e8" stroke-width="1.3" fill="none"/><path d="M4.8 7.6l5-2.3 3.6 1.4v3.4l-5 2.3-3.6-1.4z M4.8 7.6l3.6 1.5 5-2.4 M8.4 9.1v3.4" stroke="#6cc4ff" stroke-width="1.1" fill="none" stroke-linejoin="round"/></svg>
<div class="r" style="left:1369.5px;top:84.1px;height:26.4px;line-height:26.4px;font-size:15.6px;color:#a9a9a9;letter-spacing:0.3px">observer</div>
<div class="a" style="left:479px;top:109.7px;width:1120px;height:718.3px;overflow:hidden;background:#1f1f1f">
<div class="a" style="left:86px;top:192.3px;width:1040px;height:25.2px;border-top:1px solid #282828;border-bottom:1px solid #282828"></div>
<div class="a" style="left:86.2px;top:116.7px;width:1px;height:25.5px;background:#404040"></div>
<div class="a" style="left:126.5px;top:116.7px;width:1px;height:25.5px;background:#404040"></div>
<div class="a" style="left:166.8px;top:116.7px;width:1px;height:25.5px;background:#707070"></div>
<div class="a" style="left:207.2px;top:116.7px;width:1px;height:25.5px;background:#404040"></div>
<div class="a" style="left:86.2px;top:141.9px;width:1px;height:25.5px;background:#404040"></div>
<div class="a" style="left:126.5px;top:141.9px;width:1px;height:25.5px;background:#404040"></div>
<div class="a" style="left:166.8px;top:141.9px;width:1px;height:25.5px;background:#707070"></div>
<div class="a" style="left:86.2px;top:167.1px;width:1px;height:25.5px;background:#404040"></div>
<div class="a" style="left:126.5px;top:167.1px;width:1px;height:25.5px;background:#404040"></div>
<div class="a" style="left:166.8px;top:167.1px;width:1px;height:25.5px;background:#707070"></div>
<div class="a" style="left:86.2px;top:192.3px;width:1px;height:25.5px;background:#404040"></div>
<div class="a" style="left:126.5px;top:192.3px;width:1px;height:25.5px;background:#404040"></div>
<div class="a" style="left:86.2px;top:217.5px;width:1px;height:25.5px;background:#404040"></div>
<div class="a" style="left:126.5px;top:217.5px;width:1px;height:25.5px;background:#404040"></div>
<div class="a" style="left:86.2px;top:242.7px;width:1px;height:25.5px;background:#404040"></div>
<div class="a" style="left:126.5px;top:242.7px;width:1px;height:25.5px;background:#404040"></div>
<div class="a" style="left:86.2px;top:267.9px;width:1px;height:25.5px;background:#404040"></div>
<div class="a" style="left:126.5px;top:267.9px;width:1px;height:25.5px;background:#404040"></div>
<div class="a" style="left:166.8px;top:267.9px;width:1px;height:25.5px;background:#404040"></div>
<div class="a" style="left:86.2px;top:293.1px;width:1px;height:25.5px;background:#404040"></div>
<div class="a" style="left:126.5px;top:293.1px;width:1px;height:25.5px;background:#404040"></div>
<div class="a" style="left:86.2px;top:318.3px;width:1px;height:25.5px;background:#404040"></div>
<div class="a" style="left:126.5px;top:318.3px;width:1px;height:25.5px;background:#404040"></div>
<div class="a" style="left:86.2px;top:343.5px;width:1px;height:25.5px;background:#404040"></div>
<div class="a" style="left:126.5px;top:343.5px;width:1px;height:25.5px;background:#404040"></div>
<div class="a" style="left:166.8px;top:343.5px;width:1px;height:25.5px;background:#404040"></div>
<div class="a" style="left:86.2px;top:368.7px;width:1px;height:25.5px;background:#404040"></div>
<div class="a" style="left:126.5px;top:368.7px;width:1px;height:25.5px;background:#404040"></div>
<div class="a" style="left:166.8px;top:368.7px;width:1px;height:25.5px;background:#404040"></div>
<div class="a" style="left:207.2px;top:368.7px;width:1px;height:25.5px;background:#404040"></div>
<div class="a" style="left:86.2px;top:393.9px;width:1px;height:25.5px;background:#404040"></div>
<div class="a" style="left:126.5px;top:393.9px;width:1px;height:25.5px;background:#404040"></div>
<div class="a" style="left:166.8px;top:393.9px;width:1px;height:25.5px;background:#404040"></div>
<div class="a" style="left:86.2px;top:419.1px;width:1px;height:25.5px;background:#404040"></div>
<div class="a" style="left:126.5px;top:419.1px;width:1px;height:25.5px;background:#404040"></div>
<div class="a" style="left:86.2px;top:444.3px;width:1px;height:25.5px;background:#404040"></div>
<div class="a" style="left:86.2px;top:469.5px;width:1px;height:25.5px;background:#404040"></div>
<div class="a" style="left:86.2px;top:494.7px;width:1px;height:25.5px;background:#404040"></div>
<div class="a" style="left:86.2px;top:519.9px;width:1px;height:25.5px;background:#404040"></div>
<div class="a" style="left:126.5px;top:519.9px;width:1px;height:25.5px;background:#404040"></div>
<div class="a" style="left:86.2px;top:545.1px;width:1px;height:25.5px;background:#404040"></div>
<div class="a" style="left:126.5px;top:545.1px;width:1px;height:25.5px;background:#404040"></div>
<div class="a" style="left:166.8px;top:545.1px;width:1px;height:25.5px;background:#404040"></div>
<div class="a" style="left:86.2px;top:570.3px;width:1px;height:25.5px;background:#404040"></div>
<div class="a" style="left:126.5px;top:570.3px;width:1px;height:25.5px;background:#404040"></div>
<div class="a" style="left:166.8px;top:570.3px;width:1px;height:25.5px;background:#404040"></div>
<div class="a" style="left:207.2px;top:570.3px;width:1px;height:25.5px;background:#404040"></div>
<div class="a" style="left:86.2px;top:595.5px;width:1px;height:25.5px;background:#404040"></div>
<div class="a" style="left:126.5px;top:595.5px;width:1px;height:25.5px;background:#404040"></div>
<div class="a" style="left:166.8px;top:595.5px;width:1px;height:25.5px;background:#404040"></div>
<div class="a" style="left:207.2px;top:595.5px;width:1px;height:25.5px;background:#404040"></div>
<div class="a" style="left:247.5px;top:595.5px;width:1px;height:25.5px;background:#404040"></div>
<div class="a" style="left:86.2px;top:620.7px;width:1px;height:25.5px;background:#404040"></div>
<div class="a" style="left:126.5px;top:620.7px;width:1px;height:25.5px;background:#404040"></div>
<div class="a" style="left:166.8px;top:620.7px;width:1px;height:25.5px;background:#404040"></div>
<div class="a" style="left:207.2px;top:620.7px;width:1px;height:25.5px;background:#404040"></div>
<div class="a" style="left:247.5px;top:620.7px;width:1px;height:25.5px;background:#404040"></div>
<div class="a" style="left:287.8px;top:620.7px;width:1px;height:25.5px;background:#404040"></div>
<div class="a" style="left:86.2px;top:645.9px;width:1px;height:25.5px;background:#404040"></div>
<div class="a" style="left:126.5px;top:645.9px;width:1px;height:25.5px;background:#404040"></div>
<div class="a" style="left:166.8px;top:645.9px;width:1px;height:25.5px;background:#404040"></div>
<div class="a" style="left:207.2px;top:645.9px;width:1px;height:25.5px;background:#404040"></div>
<div class="a" style="left:247.5px;top:645.9px;width:1px;height:25.5px;background:#404040"></div>
<div class="a" style="left:287.8px;top:645.9px;width:1px;height:25.5px;background:#404040"></div>
<div class="a" style="left:86.2px;top:671.1px;width:1px;height:25.5px;background:#404040"></div>
<div class="a" style="left:126.5px;top:671.1px;width:1px;height:25.5px;background:#404040"></div>
<div class="a" style="left:166.8px;top:671.1px;width:1px;height:25.5px;background:#404040"></div>
<div class="a" style="left:207.2px;top:671.1px;width:1px;height:25.5px;background:#404040"></div>
<div class="a" style="left:247.5px;top:671.1px;width:1px;height:25.5px;background:#404040"></div>
<div class="a" style="left:287.8px;top:671.1px;width:1px;height:25.5px;background:#404040"></div>
<div class="a" style="left:86.2px;top:696.3px;width:1px;height:25.5px;background:#404040"></div>
<div class="a" style="left:126.5px;top:696.3px;width:1px;height:25.5px;background:#404040"></div>
<div class="a" style="left:166.8px;top:696.3px;width:1px;height:25.5px;background:#404040"></div>
<div class="a" style="left:207.2px;top:696.3px;width:1px;height:25.5px;background:#404040"></div>
<div class="a" style="left:247.5px;top:696.3px;width:1px;height:25.5px;background:#404040"></div>
<div class="r m" style="left:1px;top:116.7px;width:54.5px;height:25.2px;line-height:25.2px;font-size:16.8px;text-align:right;color:#6e7681;transform-origin:0 17.1px;transform:translateY(0.9px) scaleY(1.08)">135</div>
<div class="r m" style="left:87.0px;top:116.7px;height:25.2px;line-height:25.2px;font-size:16.8px;overflow:visible;transform-origin:0 17.1px;transform:translateY(0.9px) scaleY(1.08)"><span style="color:#d4d4d4">                </span><span style="color:#ffd700">}</span><span style="color:#179fff">)</span></div>
<div class="r m" style="left:1px;top:141.9px;width:54.5px;height:25.2px;line-height:25.2px;font-size:16.8px;text-align:right;color:#6e7681;transform-origin:0 17.1px;transform:translateY(0.9px) scaleY(1.08)">136</div>
<div class="r m" style="left:87.0px;top:141.9px;height:25.2px;line-height:25.2px;font-size:16.8px;overflow:visible;transform-origin:0 17.1px;transform:translateY(0.9px) scaleY(1.08)"><span style="color:#d4d4d4">            </span><span style="color:#da70d6">}</span><span style="color:#d4d4d4">,</span></div>
<div class="r m" style="left:1px;top:167.1px;width:54.5px;height:25.2px;line-height:25.2px;font-size:16.8px;text-align:right;color:#6e7681;transform-origin:0 17.1px;transform:translateY(0.9px) scaleY(1.08)">137</div>
<div class="r m" style="left:87.0px;top:167.1px;height:25.2px;line-height:25.2px;font-size:16.8px;overflow:visible;transform-origin:0 17.1px;transform:translateY(0.9px) scaleY(1.08)"><span style="color:#d4d4d4">            </span><span style="color:#da70d6">{</span><span style="color:#9cdcfe"> threshold</span><span style="color:#d4d4d4">: </span><span style="color:#cfcfcf">0.1</span><span style="color:#d4d4d4"> </span><span style="color:#da70d6">}</span></div>
<div class="r m" style="left:1px;top:192.3px;width:54.5px;height:25.2px;line-height:25.2px;font-size:16.8px;text-align:right;color:#cccccc;transform-origin:0 17.1px;transform:translateY(0.9px) scaleY(1.08)">138</div>
<div class="r m" style="left:87.0px;top:192.3px;height:25.2px;line-height:25.2px;font-size:16.8px;overflow:visible;transform-origin:0 17.1px;transform:translateY(0.9px) scaleY(1.08)"><span style="color:#d4d4d4">        </span><span style="color:#ffd700">)</span></div>
<div class="r m" style="left:1px;top:217.5px;width:54.5px;height:25.2px;line-height:25.2px;font-size:16.8px;text-align:right;color:#6e7681;transform-origin:0 17.1px;transform:translateY(0.9px) scaleY(1.08)">139</div>
<div class="r m" style="left:87.0px;top:217.5px;height:25.2px;line-height:25.2px;font-size:16.8px;overflow:visible;transform-origin:0 17.1px;transform:translateY(0.9px) scaleY(1.08)"></div>
<div class="r m" style="left:1px;top:242.7px;width:54.5px;height:25.2px;line-height:25.2px;font-size:16.8px;text-align:right;color:#6e7681;transform-origin:0 17.1px;transform:translateY(0.9px) scaleY(1.08)">140</div>
<div class="r m" style="left:87.0px;top:242.7px;height:25.2px;line-height:25.2px;font-size:16.8px;overflow:visible;transform-origin:0 17.1px;transform:translateY(0.9px) scaleY(1.08)"><span style="color:#c586c0">        if </span><span style="color:#ffd700">(</span><span style="color:#4fc1ff">columnRef</span><span style="color:#9cdcfe">.current</span><span style="color:#ffd700">)</span><span style="color:#d4d4d4"> </span><span style="color:#ffd700">{</span></div>
<div class="r m" style="left:1px;top:267.9px;width:54.5px;height:25.2px;line-height:25.2px;font-size:16.8px;text-align:right;color:#6e7681;transform-origin:0 17.1px;transform:translateY(0.9px) scaleY(1.08)">141</div>
<div class="r m" style="left:87.0px;top:267.9px;height:25.2px;line-height:25.2px;font-size:16.8px;overflow:visible;transform-origin:0 17.1px;transform:translateY(0.9px) scaleY(1.08)"><span style="color:#4fc1ff">            observer</span><span style="color:#dcdcdc">.observe</span><span style="color:#da70d6">(</span><span style="color:#4fc1ff">columnRef</span><span style="color:#9cdcfe">.current</span><span style="color:#da70d6">)</span><span style="color:#d4d4d4">;</span><span style="color:#6a9955"> // Observe the column</span></div>
<div class="r m" style="left:1px;top:293.1px;width:54.5px;height:25.2px;line-height:25.2px;font-size:16.8px;text-align:right;color:#6e7681;transform-origin:0 17.1px;transform:translateY(0.9px) scaleY(1.08)">142</div>
<div class="r m" style="left:87.0px;top:293.1px;height:25.2px;line-height:25.2px;font-size:16.8px;overflow:visible;transform-origin:0 17.1px;transform:translateY(0.9px) scaleY(1.08)"><span style="color:#d4d4d4">        </span><span style="color:#ffd700">}</span></div>
<div class="r m" style="left:1px;top:318.3px;width:54.5px;height:25.2px;line-height:25.2px;font-size:16.8px;text-align:right;color:#6e7681;transform-origin:0 17.1px;transform:translateY(0.9px) scaleY(1.08)">143</div>
<div class="r m" style="left:87.0px;top:318.3px;height:25.2px;line-height:25.2px;font-size:16.8px;overflow:visible;transform-origin:0 17.1px;transform:translateY(0.9px) scaleY(1.08)"><span style="color:#c586c0">        return </span><span style="color:#ffd700">()</span><span style="color:#d4d4d4"> </span><span style="color:#45b8cf">=&gt;</span><span style="color:#d4d4d4"> </span><span style="color:#ffd700">{</span></div>
<div class="r m" style="left:1px;top:343.5px;width:54.5px;height:25.2px;line-height:25.2px;font-size:16.8px;text-align:right;color:#6e7681;transform-origin:0 17.1px;transform:translateY(0.9px) scaleY(1.08)">144</div>
<div class="r m" style="left:87.0px;top:343.5px;height:25.2px;line-height:25.2px;font-size:16.8px;overflow:visible;transform-origin:0 17.1px;transform:translateY(0.9px) scaleY(1.08)"><span style="color:#c586c0">            if </span><span style="color:#da70d6">(</span><span style="color:#4fc1ff">columnRef</span><span style="color:#9cdcfe">.current</span><span style="color:#da70d6">)</span><span style="color:#d4d4d4"> </span><span style="color:#da70d6">{</span></div>
<div class="r m" style="left:1px;top:368.7px;width:54.5px;height:25.2px;line-height:25.2px;font-size:16.8px;text-align:right;color:#6e7681;transform-origin:0 17.1px;transform:translateY(0.9px) scaleY(1.08)">145</div>
<div class="r m" style="left:87.0px;top:368.7px;height:25.2px;line-height:25.2px;font-size:16.8px;overflow:visible;transform-origin:0 17.1px;transform:translateY(0.9px) scaleY(1.08)"><span style="color:#4fc1ff">                observer</span><span style="color:#dcdcdc">.unobserve</span><span style="color:#179fff">(</span><span style="color:#4fc1ff">columnRef</span><span style="color:#9cdcfe">.current</span><span style="color:#179fff">)</span><span style="color:#d4d4d4">;</span></div>
<div class="r m" style="left:1px;top:393.9px;width:54.5px;height:25.2px;line-height:25.2px;font-size:16.8px;text-align:right;color:#6e7681;transform-origin:0 17.1px;transform:translateY(0.9px) scaleY(1.08)">146</div>
<div class="r m" style="left:87.0px;top:393.9px;height:25.2px;line-height:25.2px;font-size:16.8px;overflow:visible;transform-origin:0 17.1px;transform:translateY(0.9px) scaleY(1.08)"><span style="color:#d4d4d4">            </span><span style="color:#da70d6">}</span></div>
<div class="r m" style="left:1px;top:419.09999999999997px;width:54.5px;height:25.2px;line-height:25.2px;font-size:16.8px;text-align:right;color:#6e7681;transform-origin:0 17.1px;transform:translateY(0.9px) scaleY(1.08)">147</div>
<div class="r m" style="left:87.0px;top:419.09999999999997px;height:25.2px;line-height:25.2px;font-size:16.8px;overflow:visible;transform-origin:0 17.1px;transform:translateY(0.9px) scaleY(1.08)"><span style="color:#d4d4d4">        </span><span style="color:#ffd700">}</span><span style="color:#d4d4d4">;</span></div>
<div class="r m" style="left:1px;top:444.29999999999995px;width:54.5px;height:25.2px;line-height:25.2px;font-size:16.8px;text-align:right;color:#6e7681;transform-origin:0 17.1px;transform:translateY(0.9px) scaleY(1.08)">148</div>
<div class="r m" style="left:87.0px;top:444.29999999999995px;height:25.2px;line-height:25.2px;font-size:16.8px;overflow:visible;transform-origin:0 17.1px;transform:translateY(0.9px) scaleY(1.08)"><span style="color:#d4d4d4">    </span><span style="color:#179fff">}</span><span style="color:#d4d4d4">, </span><span style="color:#179fff">[</span><span style="color:#9cdcfe">pictures</span><span style="color:#179fff">]</span><span style="color:#da70d6">)</span></div>
<div class="r m" style="left:1px;top:469.5px;width:54.5px;height:25.2px;line-height:25.2px;font-size:16.8px;text-align:right;color:#6e7681;transform-origin:0 17.1px;transform:translateY(0.9px) scaleY(1.08)">149</div>
<div class="r m" style="left:87.0px;top:469.5px;height:25.2px;line-height:25.2px;font-size:16.8px;overflow:visible;transform-origin:0 17.1px;transform:translateY(0.9px) scaleY(1.08)"></div>
<div class="r m" style="left:1px;top:494.7px;width:54.5px;height:25.2px;line-height:25.2px;font-size:16.8px;text-align:right;color:#6e7681;transform-origin:0 17.1px;transform:translateY(0.9px) scaleY(1.08)">150</div>
<div class="r m" style="left:87.0px;top:494.7px;height:25.2px;line-height:25.2px;font-size:16.8px;overflow:visible;transform-origin:0 17.1px;transform:translateY(0.9px) scaleY(1.08)"><span style="color:#c586c0">    return</span><span style="color:#da70d6">(</span></div>
<div class="r m" style="left:1px;top:519.9px;width:54.5px;height:25.2px;line-height:25.2px;font-size:16.8px;text-align:right;color:#6e7681;transform-origin:0 17.1px;transform:translateY(0.9px) scaleY(1.08)">151</div>
<div class="r m" style="left:87.0px;top:519.9px;height:25.2px;line-height:25.2px;font-size:16.8px;overflow:visible;transform-origin:0 17.1px;transform:translateY(0.9px) scaleY(1.08)"><span style="color:#808080">        &lt;</span><span style="color:#4ec9b0">motion.section</span><span style="color:#9cdcfe"> ref</span><span style="color:#d4d4d4">=</span><span style="color:#179fff">{</span><span style="color:#9cdcfe">ref</span><span style="color:#179fff">}</span><span style="color:#9cdcfe"> className</span><span style="color:#d4d4d4">=</span><span style="color:#179fff">{</span><span style="color:#4fc1ff">styles</span><span style="color:#9cdcfe">.main</span><span style="color:#179fff">}</span><span style="color:#9cdcfe"> variants</span><span style="color:#d4d4d4">=</span><span style="color:#179fff">{</span><span style="color:#9cdcfe">slideUp</span><span style="color:#179fff">}</span><span style="color:#9cdcfe"> initial</span><span style="color:#d4d4d4">=</span><span style="color:#aba4a4">'initial'</span><span style="color:#9cdcfe"> animate</span><span style="color:#d4d4d4">=</span><span style="color:#aba4a4">'animate'</span></div>
<div class="r m" style="left:1px;top:545.1px;width:54.5px;height:25.2px;line-height:25.2px;font-size:16.8px;text-align:right;color:#6e7681;transform-origin:0 17.1px;transform:translateY(0.9px) scaleY(1.08)">152</div>
<div class="r m" style="left:87.0px;top:545.1px;height:25.2px;line-height:25.2px;font-size:16.8px;overflow:visible;transform-origin:0 17.1px;transform:translateY(0.9px) scaleY(1.08)"><span style="color:#808080">            &lt;</span><span style="color:#4ab4d4">div</span><span style="color:#9cdcfe"> className</span><span style="color:#d4d4d4">=</span><span style="color:#179fff">{</span><span style="color:#4fc1ff">styles</span><span style="color:#9cdcfe">.container</span><span style="color:#179fff">}</span><span style="color:#9cdcfe"> ref</span><span style="color:#d4d4d4">=</span><span style="color:#179fff">{</span><span style="color:#9cdcfe">columnRef</span><span style="color:#179fff">}</span><span style="color:#808080">&gt;</span></div>
<div class="r m" style="left:1px;top:570.3px;width:54.5px;height:25.2px;line-height:25.2px;font-size:16.8px;text-align:right;color:#6e7681;transform-origin:0 17.1px;transform:translateY(0.9px) scaleY(1.08)">153</div>
<div class="r m" style="left:87.0px;top:570.3px;height:25.2px;line-height:25.2px;font-size:16.8px;overflow:visible;transform-origin:0 17.1px;transform:translateY(0.9px) scaleY(1.08)"><span style="color:#d4d4d4">                </span><span style="color:#179fff">{</span><span style="color:#4fc1ff">pictures</span><span style="color:#dcdcdc">.map</span><span style="color:#ffd700">(</span><span style="color:#da70d6">(</span><span style="color:#9cdcfe">picture</span><span style="color:#d4d4d4">, </span><span style="color:#9cdcfe">i</span><span style="color:#da70d6">)</span><span style="color:#d4d4d4"> </span><span style="color:#45b8cf">=&gt;</span><span style="color:#d4d4d4"> </span><span style="color:#da70d6">(</span></div>
<div class="r m" style="left:1px;top:595.5px;width:54.5px;height:25.2px;line-height:25.2px;font-size:16.8px;text-align:right;color:#6e7681;transform-origin:0 17.1px;transform:translateY(0.9px) scaleY(1.08)">154</div>
<div class="r m" style="left:87.0px;top:595.5px;height:25.2px;line-height:25.2px;font-size:16.8px;overflow:visible;transform-origin:0 17.1px;transform:translateY(0.9px) scaleY(1.08)"><span style="color:#808080">                    &lt;</span><span style="color:#4ec9b0">motion.div</span></div>
<div class="r m" style="left:1px;top:620.7px;width:54.5px;height:25.2px;line-height:25.2px;font-size:16.8px;text-align:right;color:#6e7681;transform-origin:0 17.1px;transform:translateY(0.9px) scaleY(1.08)">155</div>
<div class="r m" style="left:87.0px;top:620.7px;height:25.2px;line-height:25.2px;font-size:16.8px;overflow:visible;transform-origin:0 17.1px;transform:translateY(0.9px) scaleY(1.08)"><span style="color:#9cdcfe">                        key</span><span style="color:#d4d4d4">=</span><span style="color:#179fff">{</span><span style="color:#9cdcfe">i</span><span style="color:#179fff">}</span></div>
<div class="r m" style="left:1px;top:645.9px;width:54.5px;height:25.2px;line-height:25.2px;font-size:16.8px;text-align:right;color:#6e7681;transform-origin:0 17.1px;transform:translateY(0.9px) scaleY(1.08)">156</div>
<div class="r m" style="left:87.0px;top:645.9px;height:25.2px;line-height:25.2px;font-size:16.8px;overflow:visible;transform-origin:0 17.1px;transform:translateY(0.9px) scaleY(1.08)"><span style="color:#9cdcfe">                        className</span><span style="color:#d4d4d4">=</span><span style="color:#179fff">{</span><span style="color:#4fc1ff">styles</span><span style="color:#9cdcfe">.motionContainer</span><span style="color:#179fff">}</span></div>
<div class="r m" style="left:1px;top:671.1px;width:54.5px;height:25.2px;line-height:25.2px;font-size:16.8px;text-align:right;color:#6e7681;transform-origin:0 17.1px;transform:translateY(0.9px) scaleY(1.08)">157</div>
<div class="r m" style="left:87.0px;top:671.1px;height:25.2px;line-height:25.2px;font-size:16.8px;overflow:visible;transform-origin:0 17.1px;transform:translateY(0.9px) scaleY(1.08)"><span style="color:#9cdcfe">                        style</span><span style="color:#d4d4d4">=</span><span style="color:#179fff">{</span><span style="color:#ffd700">{</span><span style="color:#9cdcfe"> scale</span><span style="color:#d4d4d4">: </span><span style="color:#9cdcfe">picture</span><span style="color:#9cdcfe">.scale</span><span style="color:#d4d4d4"> </span><span style="color:#ffd700">}</span><span style="color:#179fff">}</span></div>
<div class="r m" style="left:1px;top:696.3000000000001px;width:54.5px;height:25.2px;line-height:25.2px;font-size:16.8px;text-align:right;color:#6e7681;transform-origin:0 17.1px;transform:translateY(0.9px) scaleY(1.08)">158</div>
<div class="r m" style="left:87.0px;top:696.3000000000001px;height:25.2px;line-height:25.2px;font-size:16.8px;overflow:visible;transform-origin:0 17.1px;transform:translateY(0.9px) scaleY(1.08)"><span style="color:#808080">                    &gt;</span></div>
<div class="a" style="left:167.04px;top:192.9px;width:10.08px;height:24.2px;border:1px solid #6a6a6a"></div>
<div class="a" style="left:178.22000000000003px;top:193.3px;width:2px;height:23.2px;background:#aeafad"></div>
<svg style="left:89px;top:192.9px" width="14" height="20" viewBox="0 0 14 20"><circle cx="7" cy="6.6" r="5.4" fill="#eec210"/><path d="M5 10h4v3.2H5z" fill="#eec210"/><circle cx="7" cy="14.3" r="1.7" stroke="#eec210" stroke-width="1.2" fill="#1f1f1f"/></svg>
<div class="a" style="left:0;top:0;width:1120px;height:116.3px;background:#1f1f1f;overflow:hidden">
<div class="r m" style="left:1px;top:91.1px;width:54.5px;height:25.2px;line-height:25.2px;font-size:16.8px;text-align:right;color:#6e7681;transform-origin:0 17.1px;transform:translateY(0.9px) scaleY(1.08)">131</div>
<div class="r m" style="left:87.0px;top:91.1px;height:25.2px;line-height:25.2px;font-size:16.8px;overflow:visible;transform-origin:0 17.1px;transform:translateY(0.9px) scaleY(1.08)"><span style="color:#9cdcfe">                entries</span><span style="color:#dcdcdc">.forEach</span><span style="color:#179fff">(</span><span style="color:#9cdcfe"> entry </span><span style="color:#45b8cf">=&gt;</span><span style="color:#d4d4d4"> </span><span style="color:#ffd700">{</span></div>
<div class="a" style="left:0;top:0.0px;width:1120px;height:25.2px;background:#1f1f1f"></div>
<div class="r m" style="left:1px;top:0.0px;width:54.5px;height:25.2px;line-height:25.2px;font-size:16.8px;text-align:right;color:#6e7681;transform-origin:0 17.1px;transform:translateY(0.9px) scaleY(1.08)">20</div>
<div class="r m" style="left:87.0px;top:0.0px;height:25.2px;line-height:25.2px;font-size:16.8px;overflow:visible;transform-origin:0 17.1px;transform:translateY(0.9px) scaleY(1.08)"><span style="color:#c586c0">export </span><span style="color:#c586c0">default </span><span style="color:#4ab4d4">function </span><span style="color:#dcdcdc">ZoomParallax</span><span style="color:#ffd700">()</span><span style="color:#d4d4d4"> </span><span style="color:#ffd700">{</span></div>
<div class="a" style="left:0;top:25.2px;width:1120px;height:25.2px;background:#1f1f1f"></div>
<div class="r m" style="left:1px;top:25.2px;width:54.5px;height:25.2px;line-height:25.2px;font-size:16.8px;text-align:right;color:#6e7681;transform-origin:0 17.1px;transform:translateY(0.9px) scaleY(1.08)">128</div>
<div class="r m" style="left:87.0px;top:25.2px;height:25.2px;line-height:25.2px;font-size:16.8px;overflow:visible;transform-origin:0 17.1px;transform:translateY(0.9px) scaleY(1.08)"><span style="color:#dcdcdc">    useEffect</span><span style="color:#da70d6">(</span><span style="color:#d4d4d4"> </span><span style="color:#179fff">()</span><span style="color:#d4d4d4"> </span><span style="color:#45b8cf">=&gt;</span><span style="color:#d4d4d4"> </span><span style="color:#179fff">{</span></div>
<div class="a" style="left:0;top:50.4px;width:1120px;height:25.2px;background:#1f1f1f"></div>
<div class="r m" style="left:1px;top:50.4px;width:54.5px;height:25.2px;line-height:25.2px;font-size:16.8px;text-align:right;color:#6e7681;transform-origin:0 17.1px;transform:translateY(0.9px) scaleY(1.08)">129</div>
<div class="r m" style="left:87.0px;top:50.4px;height:25.2px;line-height:25.2px;font-size:16.8px;overflow:visible;transform-origin:0 17.1px;transform:translateY(0.9px) scaleY(1.08)"><span style="color:#4ab4d4">        const </span><span style="color:#4fc1ff">observer</span><span style="color:#d4d4d4"> = </span><span style="color:#4ab4d4">new </span><span style="color:#4ec9b0">IntersectionObserver</span><span style="color:#ffd700">(</span></div>
<div class="a" style="left:0;top:75.6px;width:1120px;height:25.2px;background:#1f1f1f"></div>
<div class="r m" style="left:1px;top:75.6px;width:54.5px;height:25.2px;line-height:25.2px;font-size:16.8px;text-align:right;color:#6e7681;transform-origin:0 17.1px;transform:translateY(0.9px) scaleY(1.08)">130</div>
<div class="r m" style="left:87.0px;top:75.6px;height:25.2px;line-height:25.2px;font-size:16.8px;overflow:visible;transform-origin:0 17.1px;transform:translateY(0.9px) scaleY(1.08)"><span style="color:#d4d4d4">            </span><span style="color:#da70d6">(</span><span style="color:#9cdcfe">entries</span><span style="color:#da70d6">)</span><span style="color:#d4d4d4"> </span><span style="color:#45b8cf">=&gt;</span><span style="color:#d4d4d4"> </span><span style="color:#da70d6">{</span></div>
</div>
<div class="a" style="left:0;top:116.3px;width:1120px;height:5px;background:linear-gradient(rgba(0,0,0,.75),rgba(0,0,0,0))"></div>
<div class="a" style="left:86px;top:702.3px;width:467px;height:14.5px;background:rgba(121,121,121,.42)"></div>
</div>
<div class="a" style="left:1598px;top:109.7px;width:2px;height:718px;background:#141414"></div>
<div class="a" style="left:1080.7px;top:109.7px;width:502px;height:38.7px;background:#222222;border-bottom-left-radius:4px;border-bottom-right-radius:4px;box-shadow:0 0 8px 2px rgba(0,0,0,.45)"></div>
<div class="a" style="left:1080.7px;top:109.7px;width:3px;height:38.7px;background:#3c3c3c"></div>
<svg style="left:1091px;top:122px" width="10" height="14" viewBox="0 0 10 14"><path d="M2 1.5l5 5.5-5 5.5" stroke="#cccccc" stroke-width="1.3"/></svg>
<div class="a" style="left:1106px;top:113.8px;width:265.6px;height:29.1px;background:#2a2a2a;border:1px solid #3c3c3c;border-radius:3px"></div>
<div class="r" style="left:1114.4px;top:114.5px;height:28px;line-height:28px;font-size:15.6px;color:#cccccc;letter-spacing:0.3px">usememeo</div>
<div class="r" style="left:1296.5px;top:115.0px;height:28px;line-height:28px;font-size:14px;color:#cccccc;">Aa</div>
<div class="r" style="left:1322px;top:115px;height:28px;line-height:28px;font-size:14px;color:#cccccc">ab</div>
<div class="a" style="left:1320.5px;top:137px;width:1.2px;height:4px;background:#cccccc"></div>
<div class="a" style="left:1340px;top:137px;width:1.2px;height:4px;background:#cccccc"></div>
<div class="a" style="left:1320.5px;top:140px;width:20.7px;height:1.2px;background:#cccccc"></div>
<div class="a" style="left:1349px;top:134px;width:4.5px;height:4.5px;background:#cccccc"></div>
<div class="r" style="left:1354px;top:112.5px;height:28px;line-height:28px;font-size:20px;color:#cccccc;">*</div>
<div class="r" style="left:1378px;top:115.5px;height:28px;line-height:28px;font-size:15.6px;color:#f14c78;letter-spacing:-0.2px">No results</div>
<svg style="left:1468px;top:120px" width="14" height="18" viewBox="0 0 14 18"><path d="M7 16.5V2M1.5 7.5L7 2l5.5 5.5" stroke="#8f8f8f" stroke-width="1.3"/></svg>
<svg style="left:1498px;top:120px" width="14" height="18" viewBox="0 0 14 18"><path d="M7 1.5V16M1.5 10.5L7 16l5.5-5.5" stroke="#8f8f8f" stroke-width="1.3"/></svg>
<svg style="left:1525px;top:121px" width="20" height="16" viewBox="0 0 20 16"><path d="M1 3h17M1 8h17M1 13h11" stroke="#cccccc" stroke-width="1.4"/></svg>
<svg style="left:1557px;top:122px" width="13" height="13" viewBox="0 0 13 13"><path d="M1 1l11 11M12 1L1 12" stroke="#cccccc" stroke-width="1.4"/></svg>
<svg style="left:1603px;top:110px" width="108" height="390" viewBox="0 0 108 390"><g opacity=".55"><rect x="0.00" y="0.50" width="6.30" height="1.3" fill="#6a5a78"/><rect x="7.35" y="0.50" width="6.30" height="1.3" fill="#5c5c5c"/><rect x="14.70" y="0.50" width="4.20" height="1.3" fill="#6a5a78"/><rect x="19.95" y="0.50" width="23.10" height="1.3" fill="#7a6050"/><rect x="0.00" y="3.10" width="6.30" height="1.3" fill="#6a5a78"/><rect x="7.35" y="3.10" width="8.40" height="1.3" fill="#3d7f78"/><rect x="16.80" y="3.10" width="4.20" height="1.3" fill="#6a5a78"/><rect x="22.05" y="3.10" width="35.70" height="1.3" fill="#7a6050"/><rect x="0.00" y="5.70" width="6.30" height="1.3" fill="#6a5a78"/><rect x="7.35" y="5.70" width="8.40" height="1.3" fill="#3d7f78"/><rect x="16.80" y="5.70" width="4.20" height="1.3" fill="#6a5a78"/><rect x="22.05" y="5.70" width="35.70" height="1.3" fill="#7a6050"/><rect x="0.00" y="8.30" width="6.30" height="1.3" fill="#6a5a78"/><rect x="7.35" y="8.30" width="1.05" height="1.3" fill="#5c5c5c"/><rect x="9.45" y="8.30" width="10.50" height="1.3" fill="#3c78a8"/><rect x="21.00" y="8.30" width="13.65" height="1.3" fill="#3c78a8"/><rect x="35.70" y="8.30" width="6.30" height="1.3" fill="#5c5c5c"/><rect x="43.05" y="8.30" width="1.05" height="1.3" fill="#5c5c5c"/><rect x="45.15" y="8.30" width="4.20" height="1.3" fill="#6a5a78"/><rect x="50.40" y="8.30" width="16.80" height="1.3" fill="#7a6050"/><rect x="0.00" y="10.90" width="6.30" height="1.3" fill="#6a5a78"/><rect x="7.35" y="10.90" width="1.05" height="1.3" fill="#5c5c5c"/><rect x="9.45" y="10.90" width="7.35" height="1.3" fill="#3c78a8"/><rect x="17.85" y="10.90" width="9.45" height="1.3" fill="#3c78a8"/><rect x="28.35" y="10.90" width="1.05" height="1.3" fill="#5c5c5c"/><rect x="30.45" y="10.90" width="4.20" height="1.3" fill="#6a5a78"/><rect x="35.70" y="10.90" width="8.40" height="1.3" fill="#7a6050"/><rect x="0.00" y="13.50" width="6.30" height="1.3" fill="#6a5a78"/><rect x="7.35" y="13.50" width="1.05" height="1.3" fill="#5c5c5c"/><rect x="9.45" y="13.50" width="7.35" height="1.3" fill="#3c78a8"/><rect x="17.85" y="13.50" width="1.05" height="1.3" fill="#5c5c5c"/><rect x="19.95" y="13.50" width="4.20" height="1.3" fill="#6a5a78"/><rect x="25.20" y="13.50" width="9.45" height="1.3" fill="#7a6050"/><rect x="0.00" y="18.70" width="5.25" height="1.3" fill="#6a5a78"/><rect x="6.30" y="18.70" width="4.20" height="1.3" fill="#5c5c5c"/><rect x="11.55" y="18.70" width="1.05" height="1.3" fill="#5c5c5c"/><rect x="13.65" y="18.70" width="1.05" height="1.3" fill="#5c5c5c"/><rect x="15.75" y="18.70" width="8.40" height="1.3" fill="#5c5c5c"/><rect x="25.20" y="18.70" width="3.15" height="1.3" fill="#5c5c5c"/><rect x="29.40" y="18.70" width="5.25" height="1.3" fill="#5c5c5c"/><rect x="35.70" y="18.70" width="2.10" height="1.3" fill="#5c5c5c"/><rect x="38.85" y="18.70" width="2.10" height="1.3" fill="#5c5c5c"/><rect x="0.00" y="23.90" width="6.30" height="1.3" fill="#6a5a78"/><rect x="7.35" y="23.90" width="8.40" height="1.3" fill="#3d7f78"/><rect x="16.80" y="23.90" width="4.20" height="1.3" fill="#6a5a78"/><rect x="22.05" y="23.90" width="35.70" height="1.3" fill="#7a6050"/><rect x="0.00" y="26.50" width="6.30" height="1.3" fill="#6a5a78"/><rect x="7.35" y="26.50" width="8.40" height="1.3" fill="#3d7f78"/><rect x="16.80" y="26.50" width="4.20" height="1.3" fill="#6a5a78"/><rect x="22.05" y="26.50" width="35.70" height="1.3" fill="#7a6050"/><rect x="0.00" y="29.10" width="6.30" height="1.3" fill="#6a5a78"/><rect x="7.35" y="29.10" width="8.40" height="1.3" fill="#3d7f78"/><rect x="16.80" y="29.10" width="4.20" height="1.3" fill="#6a5a78"/><rect x="22.05" y="29.10" width="35.70" height="1.3" fill="#7a6050"/><rect x="0.00" y="31.70" width="6.30" height="1.3" fill="#6a5a78"/><rect x="7.35" y="31.70" width="8.40" height="1.3" fill="#3d7f78"/><rect x="16.80" y="31.70" width="4.20" height="1.3" fill="#6a5a78"/><rect x="22.05" y="31.70" width="35.70" height="1.3" fill="#7a6050"/><rect x="0.00" y="34.30" width="6.30" height="1.3" fill="#6a5a78"/><rect x="7.35" y="34.30" width="8.40" height="1.3" fill="#3d7f78"/><rect x="16.80" y="34.30" width="4.20" height="1.3" fill="#6a5a78"/><rect x="22.05" y="34.30" width="35.70" height="1.3" fill="#7a6050"/><rect x="0.00" y="36.90" width="6.30" height="1.3" fill="#6a5a78"/><rect x="7.35" y="36.90" width="8.40" height="1.3" fill="#3d7f78"/><rect x="16.80" y="36.90" width="4.20" height="1.3" fill="#6a5a78"/><rect x="22.05" y="36.90" width="35.70" height="1.3" fill="#7a6050"/><rect x="0.00" y="39.50" width="6.30" height="1.3" fill="#6a5a78"/><rect x="7.35" y="39.50" width="8.40" height="1.3" fill="#3d7f78"/><rect x="16.80" y="39.50" width="4.20" height="1.3" fill="#6a5a78"/><rect x="22.05" y="39.50" width="35.70" height="1.3" fill="#7a6050"/><rect x="0.00" y="47.30" width="6.30" height="1.3" fill="#6a5a78"/><rect x="7.35" y="47.30" width="7.35" height="1.3" fill="#6a5a78"/><rect x="15.75" y="47.30" width="8.40" height="1.3" fill="#6a5a78"/><rect x="25.20" y="47.30" width="14.70" height="1.3" fill="#3d7f78"/><rect x="40.95" y="47.30" width="1.05" height="1.3" fill="#5c5c5c"/><rect x="4.20" y="52.50" width="5.25" height="1.3" fill="#6a5a78"/><rect x="10.50" y="52.50" width="9.45" height="1.3" fill="#5c5c5c"/><rect x="21.00" y="52.50" width="1.05" height="1.3" fill="#5c5c5c"/><rect x="23.10" y="52.50" width="13.65" height="1.3" fill="#3c78a8"/><rect x="4.20" y="55.10" width="5.25" height="1.3" fill="#6a5a78"/><rect x="10.50" y="55.10" width="1.05" height="1.3" fill="#5c5c5c"/><rect x="12.60" y="55.10" width="15.75" height="1.3" fill="#3c78a8"/><rect x="29.40" y="55.10" width="1.05" height="1.3" fill="#5c5c5c"/><rect x="31.50" y="55.10" width="1.05" height="1.3" fill="#5c5c5c"/><rect x="33.60" y="55.10" width="11.55" height="1.3" fill="#3c78a8"/><rect x="8.40" y="57.70" width="7.35" height="1.3" fill="#5c5c5c"/><rect x="16.80" y="57.70" width="10.50" height="1.3" fill="#5c5c5c"/><rect x="8.40" y="60.30" width="7.35" height="1.3" fill="#5c5c5c"/><rect x="16.80" y="60.30" width="7.35" height="1.3" fill="#5c5c5c"/><rect x="25.20" y="60.30" width="7.35" height="1.3" fill="#5c5c5c"/><rect x="33.60" y="60.30" width="4.20" height="1.3" fill="#7a6050"/><rect x="38.85" y="60.30" width="5.25" height="1.3" fill="#5c5c5c"/><rect x="4.20" y="62.90" width="2.10" height="1.3" fill="#5c5c5c"/><rect x="4.20" y="68.10" width="5.25" height="1.3" fill="#6a5a78"/><rect x="10.50" y="68.10" width="6.30" height="1.3" fill="#5c5c5c"/><rect x="17.85" y="68.10" width="1.05" height="1.3" fill="#5c5c5c"/><rect x="19.95" y="68.10" width="30.45" height="1.3" fill="#3c78a8"/><rect x="51.45" y="68.10" width="3.15" height="1.3" fill="#5c5c5c"/><rect x="55.65" y="68.10" width="3.15" height="1.3" fill="#5c5c5c"/><rect x="59.85" y="68.10" width="3.15" height="1.3" fill="#5c5c5c"/><rect x="64.05" y="68.10" width="4.20" height="1.3" fill="#5c5c5c"/><rect x="4.20" y="70.70" width="5.25" height="1.3" fill="#6a5a78"/><rect x="10.50" y="70.70" width="6.30" height="1.3" fill="#5c5c5c"/><rect x="17.85" y="70.70" width="1.05" height="1.3" fill="#5c5c5c"/><rect x="19.95" y="70.70" width="30.45" height="1.3" fill="#3c78a8"/><rect x="51.45" y="70.70" width="3.15" height="1.3" fill="#5c5c5c"/><rect x="55.65" y="70.70" width="3.15" height="1.3" fill="#5c5c5c"/><rect x="59.85" y="70.70" width="3.15" height="1.3" fill="#5c5c5c"/><rect x="64.05" y="70.70" width="4.20" height="1.3" fill="#5c5c5c"/><rect x="4.20" y="73.30" width="5.25" height="1.3" fill="#6a5a78"/><rect x="10.50" y="73.30" width="6.30" height="1.3" fill="#5c5c5c"/><rect x="17.85" y="73.30" width="1.05" height="1.3" fill="#5c5c5c"/><rect x="19.95" y="73.30" width="30.45" height="1.3" fill="#3c78a8"/><rect x="51.45" y="73.30" width="3.15" height="1.3" fill="#5c5c5c"/><rect x="55.65" y="73.30" width="3.15" height="1.3" fill="#5c5c5c"/><rect x="59.85" y="73.30" width="3.15" height="1.3" fill="#5c5c5c"/><rect x="64.05" y="73.30" width="4.20" height="1.3" fill="#5c5c5c"/><rect x="4.20" y="75.90" width="5.25" height="1.3" fill="#6a5a78"/><rect x="10.50" y="75.90" width="6.30" height="1.3" fill="#5c5c5c"/><rect x="17.85" y="75.90" width="1.05" height="1.3" fill="#5c5c5c"/><rect x="19.95" y="75.90" width="30.45" height="1.3" fill="#3c78a8"/><rect x="51.45" y="75.90" width="3.15" height="1.3" fill="#5c5c5c"/><rect x="55.65" y="75.90" width="3.15" height="1.3" fill="#5c5c5c"/><rect x="59.85" y="75.90" width="3.15" height="1.3" fill="#5c5c5c"/><rect x="64.05" y="75.90" width="4.20" height="1.3" fill="#5c5c5c"/><rect x="4.20" y="78.50" width="5.25" height="1.3" fill="#6a5a78"/><rect x="10.50" y="78.50" width="6.30" height="1.3" fill="#5c5c5c"/><rect x="17.85" y="78.50" width="1.05" height="1.3" fill="#5c5c5c"/><rect x="19.95" y="78.50" width="30.45" height="1.3" fill="#3c78a8"/><rect x="51.45" y="78.50" width="3.15" height="1.3" fill="#5c5c5c"/><rect x="55.65" y="78.50" width="3.15" height="1.3" fill="#5c5c5c"/><rect x="59.85" y="78.50" width="3.15" height="1.3" fill="#5c5c5c"/><rect x="64.05" y="78.50" width="4.20" height="1.3" fill="#5c5c5c"/><rect x="4.20" y="83.70" width="5.25" height="1.3" fill="#6a5a78"/><rect x="10.50" y="83.70" width="3.15" height="1.3" fill="#5c5c5c"/><rect x="14.70" y="83.70" width="1.05" height="1.3" fill="#5c5c5c"/><rect x="16.80" y="83.70" width="13.65" height="1.3" fill="#3c78a8"/><rect x="4.20" y="86.30" width="5.25" height="1.3" fill="#6a5a78"/><rect x="10.50" y="86.30" width="9.45" height="1.3" fill="#3c78a8"/><rect x="21.00" y="86.30" width="1.05" height="1.3" fill="#5c5c5c"/><rect x="23.10" y="86.30" width="13.65" height="1.3" fill="#3c78a8"/><rect x="4.20" y="88.90" width="5.25" height="1.3" fill="#6a5a78"/><rect x="10.50" y="88.90" width="8.40" height="1.3" fill="#3c78a8"/><rect x="19.95" y="88.90" width="1.05" height="1.3" fill="#5c5c5c"/><rect x="22.05" y="88.90" width="15.75" height="1.3" fill="#3c78a8"/><rect x="4.20" y="91.50" width="5.25" height="1.3" fill="#6a5a78"/><rect x="10.50" y="91.50" width="1.05" height="1.3" fill="#5c5c5c"/><rect x="12.60" y="91.50" width="1.05" height="1.3" fill="#5c5c5c"/><rect x="14.70" y="91.50" width="1.05" height="1.3" fill="#5c5c5c"/><rect x="16.80" y="91.50" width="1.05" height="1.3" fill="#5c5c5c"/><rect x="18.90" y="91.50" width="12.60" height="1.3" fill="#3c78a8"/><rect x="4.20" y="94.10" width="3.15" height="1.3" fill="#6a5a78"/><rect x="8.40" y="94.10" width="1.05" height="1.3" fill="#5c5c5c"/><rect x="10.50" y="94.10" width="1.05" height="1.3" fill="#5c5c5c"/><rect x="12.60" y="94.10" width="2.10" height="1.3" fill="#5c5c5c"/><rect x="4.20" y="96.70" width="5.25" height="1.3" fill="#6a5a78"/><rect x="10.50" y="96.70" width="6.30" height="1.3" fill="#5c5c5c"/><rect x="17.85" y="96.70" width="1.05" height="1.3" fill="#5c5c5c"/><rect x="19.95" y="96.70" width="30.45" height="1.3" fill="#3c78a8"/><rect x="51.45" y="96.70" width="3.15" height="1.3" fill="#5c5c5c"/><rect x="55.65" y="96.70" width="5.25" height="1.3" fill="#3c78a8"/><rect x="61.95" y="96.70" width="4.20" height="1.3" fill="#5c5c5c"/><rect x="67.20" y="96.70" width="4.20" height="1.3" fill="#5c5c5c"/><rect x="4.20" y="99.30" width="5.25" height="1.3" fill="#6a5a78"/><rect x="10.50" y="99.30" width="2.10" height="1.3" fill="#5c5c5c"/><rect x="13.65" y="99.30" width="1.05" height="1.3" fill="#5c5c5c"/><rect x="15.75" y="99.30" width="30.45" height="1.3" fill="#3c78a8"/><rect x="47.25" y="99.30" width="3.15" height="1.3" fill="#5c5c5c"/><rect x="51.45" y="99.30" width="3.15" height="1.3" fill="#5c5c5c"/><rect x="55.65" y="99.30" width="3.15" height="1.3" fill="#5c5c5c"/><rect x="59.85" y="99.30" width="9.45" height="1.3" fill="#5c5c5c"/><rect x="4.20" y="101.90" width="5.25" height="1.3" fill="#6a5a78"/><rect x="10.50" y="101.90" width="5.25" height="1.3" fill="#5c5c5c"/><rect x="16.80" y="101.90" width="1.05" height="1.3" fill="#5c5c5c"/><rect x="18.90" y="101.90" width="16.80" height="1.3" fill="#3c78a8"/><rect x="36.75" y="101.90" width="3.15" height="1.3" fill="#5c5c5c"/><rect x="40.95" y="101.90" width="4.20" height="1.3" fill="#5c5c5c"/><rect x="4.20" y="107.10" width="5.25" height="1.3" fill="#6a5a78"/><rect x="10.50" y="107.10" width="8.40" height="1.3" fill="#5c5c5c"/><rect x="19.95" y="107.10" width="1.05" height="1.3" fill="#5c5c5c"/><rect x="22.05" y="107.10" width="1.05" height="1.3" fill="#5c5c5c"/><rect x="8.40" y="109.70" width="1.05" height="1.3" fill="#5c5c5c"/><rect x="12.60" y="112.30" width="4.20" height="1.3" fill="#5c5c5c"/><rect x="17.85" y="112.30" width="9.45" height="1.3" fill="#3d7f78"/><rect x="12.60" y="114.90" width="6.30" height="1.3" fill="#5c5c5c"/><rect x="19.95" y="114.90" width="7.35" height="1.3" fill="#5c5c5c"/><rect x="28.35" y="114.90" width="5.25" height="1.3" fill="#5c5c5c"/><rect x="34.65" y="114.90" width="35.70" height="1.3" fill="#7a6050"/><rect x="12.60" y="117.50" width="6.30" height="1.3" fill="#5c5c5c"/><rect x="19.95" y="117.50" width="8.40" height="1.3" fill="#7a6050"/><rect x="29.40" y="117.50" width="4.20" height="1.3" fill="#5c5c5c"/><rect x="8.40" y="120.10" width="2.10" height="1.3" fill="#5c5c5c"/><rect x="8.40" y="122.70" width="1.05" height="1.3" fill="#5c5c5c"/><rect x="12.60" y="125.30" width="4.20" height="1.3" fill="#5c5c5c"/><rect x="17.85" y="125.30" width="9.45" height="1.3" fill="#3d7f78"/><rect x="12.60" y="127.90" width="6.30" height="1.3" fill="#5c5c5c"/><rect x="19.95" y="127.90" width="7.35" height="1.3" fill="#5c5c5c"/><rect x="28.35" y="127.90" width="6.30" height="1.3" fill="#5c5c5c"/><rect x="35.70" y="127.90" width="8.40" height="1.3" fill="#7a6050"/><rect x="45.15" y="127.90" width="4.20" height="1.3" fill="#5c5c5c"/><rect x="12.60" y="130.50" width="6.30" height="1.3" fill="#5c5c5c"/><rect x="19.95" y="130.50" width="5.25" height="1.3" fill="#7a6050"/><rect x="8.40" y="133.10" width="2.10" height="1.3" fill="#5c5c5c"/><rect x="8.40" y="135.70" width="1.05" height="1.3" fill="#5c5c5c"/><rect x="12.60" y="138.30" width="4.20" height="1.3" fill="#5c5c5c"/><rect x="17.85" y="138.30" width="9.45" height="1.3" fill="#3d7f78"/><rect x="12.60" y="140.90" width="6.30" height="1.3" fill="#5c5c5c"/><rect x="19.95" y="140.90" width="7.35" height="1.3" fill="#5c5c5c"/><rect x="28.35" y="140.90" width="6.30" height="1.3" fill="#5c5c5c"/><rect x="35.70" y="140.90" width="8.40" height="1.3" fill="#7a6050"/><rect x="45.15" y="140.90" width="2.10" height="1.3" fill="#5c5c5c"/><rect x="12.60" y="143.50" width="6.30" height="1.3" fill="#5c5c5c"/><rect x="19.95" y="143.50" width="7.35" height="1.3" fill="#7a6050"/><rect x="8.40" y="146.10" width="2.10" height="1.3" fill="#5c5c5c"/><rect x="8.40" y="148.70" width="1.05" height="1.3" fill="#5c5c5c"/><rect x="12.60" y="151.30" width="4.20" height="1.3" fill="#5c5c5c"/><rect x="17.85" y="151.30" width="9.45" height="1.3" fill="#3d7f78"/><rect x="12.60" y="153.90" width="6.30" height="1.3" fill="#5c5c5c"/><rect x="19.95" y="153.90" width="7.35" height="1.3" fill="#5c5c5c"/><rect x="28.35" y="153.90" width="6.30" height="1.3" fill="#5c5c5c"/><rect x="35.70" y="153.90" width="8.40" height="1.3" fill="#7a6050"/><rect x="45.15" y="153.90" width="2.10" height="1.3" fill="#5c5c5c"/><rect x="12.60" y="156.50" width="6.30" height="1.3" fill="#5c5c5c"/><rect x="19.95" y="156.50" width="6.30" height="1.3" fill="#7a6050"/><rect x="8.40" y="159.10" width="2.10" height="1.3" fill="#5c5c5c"/><rect x="8.40" y="161.70" width="1.05" height="1.3" fill="#5c5c5c"/><rect x="12.60" y="164.30" width="4.20" height="1.3" fill="#5c5c5c"/><rect x="17.85" y="164.30" width="9.45" height="1.3" fill="#3d7f78"/><rect x="12.60" y="166.90" width="6.30" height="1.3" fill="#5c5c5c"/><rect x="19.95" y="166.90" width="7.35" height="1.3" fill="#5c5c5c"/><rect x="28.35" y="166.90" width="6.30" height="1.3" fill="#5c5c5c"/><rect x="35.70" y="166.90" width="8.40" height="1.3" fill="#7a6050"/><rect x="45.15" y="166.90" width="2.10" height="1.3" fill="#5c5c5c"/><rect x="12.60" y="169.50" width="6.30" height="1.3" fill="#5c5c5c"/><rect x="19.95" y="169.50" width="6.30" height="1.3" fill="#7a6050"/><rect x="8.40" y="172.10" width="2.10" height="1.3" fill="#5c5c5c"/><rect x="8.40" y="174.70" width="1.05" height="1.3" fill="#5c5c5c"/><rect x="12.60" y="177.30" width="4.20" height="1.3" fill="#5c5c5c"/><rect x="17.85" y="177.30" width="9.45" height="1.3" fill="#3d7f78"/><rect x="12.60" y="179.90" width="6.30" height="1.3" fill="#5c5c5c"/><rect x="19.95" y="179.90" width="7.35" height="1.3" fill="#5c5c5c"/><rect x="28.35" y="179.90" width="6.30" height="1.3" fill="#5c5c5c"/><rect x="35.70" y="179.90" width="8.40" height="1.3" fill="#7a6050"/><rect x="45.15" y="179.90" width="2.10" height="1.3" fill="#5c5c5c"/><rect x="12.60" y="182.50" width="6.30" height="1.3" fill="#5c5c5c"/><rect x="19.95" y="182.50" width="5.25" height="1.3" fill="#7a6050"/><rect x="8.40" y="185.10" width="2.10" height="1.3" fill="#5c5c5c"/><rect x="4.20" y="187.70" width="1.05" height="1.3" fill="#5c5c5c"/><rect x="4.20" y="192.90" width="5.25" height="1.3" fill="#6a5a78"/><rect x="10.50" y="192.90" width="5.25" height="1.3" fill="#5c5c5c"/><rect x="16.80" y="192.90" width="1.05" height="1.3" fill="#5c5c5c"/><rect x="18.90" y="192.90" width="1.05" height="1.3" fill="#5c5c5c"/><rect x="8.40" y="195.50" width="8.40" height="1.3" fill="#5c5c5c"/><rect x="17.85" y="195.50" width="1.05" height="1.3" fill="#5c5c5c"/><rect x="19.95" y="195.50" width="8.40" height="1.3" fill="#5c5c5c"/><rect x="29.40" y="195.50" width="1.05" height="1.3" fill="#5c5c5c"/><rect x="31.50" y="195.50" width="2.10" height="1.3" fill="#5c5c5c"/><rect x="8.40" y="198.10" width="5.25" height="1.3" fill="#5c5c5c"/><rect x="14.70" y="198.10" width="3.15" height="1.3" fill="#5c5c5c"/><rect x="18.90" y="198.10" width="2.10" height="1.3" fill="#5c5c5c"/><rect x="22.05" y="198.10" width="2.10" height="1.3" fill="#5c5c5c"/><rect x="12.60" y="200.70" width="2.10" height="1.3" fill="#5c5c5c"/><rect x="15.75" y="200.70" width="5.25" height="1.3" fill="#7a6050"/><rect x="12.60" y="203.30" width="11.55" height="1.3" fill="#5c5c5c"/><rect x="25.20" y="203.30" width="10.50" height="1.3" fill="#5c5c5c"/><rect x="36.75" y="203.30" width="4.20" height="1.3" fill="#3c78a8"/><rect x="42.00" y="203.30" width="6.30" height="1.3" fill="#5c5c5c"/><rect x="49.35" y="203.30" width="4.20" height="1.3" fill="#3c78a8"/><rect x="54.60" y="203.30" width="1.05" height="1.3" fill="#5c5c5c"/><rect x="56.70" y="203.30" width="2.10" height="1.3" fill="#5c5c5c"/><rect x="8.40" y="205.90" width="3.15" height="1.3" fill="#5c5c5c"/><rect x="8.40" y="208.50" width="7.35" height="1.3" fill="#5c5c5c"/><rect x="16.80" y="208.50" width="1.05" height="1.3" fill="#5c5c5c"/><rect x="12.60" y="211.10" width="2.10" height="1.3" fill="#5c5c5c"/><rect x="15.75" y="211.10" width="7.35" height="1.3" fill="#7a6050"/><rect x="8.40" y="213.70" width="1.05" height="1.3" fill="#5c5c5c"/><rect x="4.20" y="216.30" width="1.05" height="1.3" fill="#5c5c5c"/><rect x="4.20" y="218.90" width="5.25" height="1.3" fill="#6a5a78"/><rect x="10.50" y="218.90" width="10.50" height="1.3" fill="#5c5c5c"/><rect x="22.05" y="218.90" width="1.05" height="1.3" fill="#5c5c5c"/><rect x="24.15" y="218.90" width="1.05" height="1.3" fill="#5c5c5c"/><rect x="26.25" y="218.90" width="9.45" height="1.3" fill="#5c5c5c"/><rect x="36.75" y="218.90" width="1.05" height="1.3" fill="#5c5c5c"/><rect x="38.85" y="218.90" width="2.10" height="1.3" fill="#5c5c5c"/><rect x="4.20" y="224.10" width="2.10" height="1.3" fill="#4f6a48"/><rect x="7.35" y="224.10" width="4.20" height="1.3" fill="#3d7f78"/><rect x="12.60" y="224.10" width="2.10" height="1.3" fill="#5c5c5c"/><rect x="15.75" y="224.10" width="1.05" height="1.3" fill="#5c5c5c"/><rect x="17.85" y="224.10" width="4.20" height="1.3" fill="#5c5c5c"/><rect x="23.10" y="224.10" width="7.35" height="1.3" fill="#5c5c5c"/><rect x="31.50" y="224.10" width="4.20" height="1.3" fill="#5c5c5c"/><rect x="36.75" y="224.10" width="10.50" height="1.3" fill="#5c5c5c"/><rect x="48.30" y="224.10" width="3.15" height="1.3" fill="#5c5c5c"/><rect x="52.50" y="224.10" width="6.30" height="1.3" fill="#5c5c5c"/><rect x="59.85" y="224.10" width="8.40" height="1.3" fill="#5c5c5c"/><rect x="69.30" y="224.10" width="2.10" height="1.3" fill="#5c5c5c"/><rect x="72.45" y="224.10" width="3.15" height="1.3" fill="#5c5c5c"/><rect x="76.65" y="224.10" width="6.30" height="1.3" fill="#5c5c5c"/><rect x="84.00" y="224.10" width="4.20" height="1.3" fill="#5c5c5c"/><rect x="89.25" y="224.10" width="2.10" height="1.3" fill="#5c5c5c"/><rect x="92.40" y="224.10" width="4.20" height="1.3" fill="#5c5c5c"/><rect x="97.65" y="224.10" width="3.15" height="1.3" fill="#5c5c5c"/><rect x="101.85" y="224.10" width="9.45" height="1.3" fill="#5c5c5c"/><rect x="4.20" y="226.70" width="2.10" height="1.3" fill="#4f6a48"/><rect x="7.35" y="226.70" width="6.30" height="1.3" fill="#5c5c5c"/><rect x="14.70" y="226.70" width="7.35" height="1.3" fill="#5c5c5c"/><rect x="23.10" y="226.70" width="4.20" height="1.3" fill="#5c5c5c"/><rect x="28.35" y="226.70" width="10.50" height="1.3" fill="#5c5c5c"/><rect x="39.90" y="226.70" width="4.20" height="1.3" fill="#5c5c5c"/><rect x="45.15" y="226.70" width="5.25" height="1.3" fill="#5c5c5c"/><rect x="51.45" y="226.70" width="4.20" height="1.3" fill="#5c5c5c"/><rect x="4.20" y="229.30" width="12.60" height="1.3" fill="#3c78a8"/><rect x="17.85" y="229.30" width="2.10" height="1.3" fill="#5c5c5c"/><rect x="21.00" y="229.30" width="1.05" height="1.3" fill="#5c5c5c"/><rect x="8.40" y="231.90" width="37.80" height="1.3" fill="#3c78a8"/><rect x="4.20" y="234.50" width="2.10" height="1.3" fill="#5c5c5c"/><rect x="7.35" y="234.50" width="4.20" height="1.3" fill="#5c5c5c"/><rect x="4.20" y="237.10" width="3.15" height="1.3" fill="#6a5a78"/><rect x="8.40" y="237.10" width="8.40" height="1.3" fill="#5c5c5c"/><rect x="17.85" y="237.10" width="1.05" height="1.3" fill="#5c5c5c"/><rect x="19.95" y="237.10" width="6.30" height="1.3" fill="#5c5c5c"/><rect x="4.20" y="239.70" width="2.10" height="1.3" fill="#4f6a48"/><rect x="7.35" y="239.70" width="7.35" height="1.3" fill="#5c5c5c"/><rect x="15.75" y="239.70" width="7.35" height="1.3" fill="#5c5c5c"/><rect x="24.15" y="239.70" width="4.20" height="1.3" fill="#5c5c5c"/><rect x="29.40" y="239.70" width="5.25" height="1.3" fill="#5c5c5c"/><rect x="35.70" y="239.70" width="2.10" height="1.3" fill="#5c5c5c"/><rect x="38.85" y="239.70" width="4.20" height="1.3" fill="#5c5c5c"/><rect x="44.10" y="239.70" width="4.20" height="1.3" fill="#5c5c5c"/><rect x="49.35" y="239.70" width="3.15" height="1.3" fill="#5c5c5c"/><rect x="53.55" y="239.70" width="9.45" height="1.3" fill="#5c5c5c"/><rect x="64.05" y="239.70" width="3.15" height="1.3" fill="#5c5c5c"/><rect x="68.25" y="239.70" width="8.40" height="1.3" fill="#5c5c5c"/><rect x="77.70" y="239.70" width="9.45" height="1.3" fill="#5c5c5c"/><rect x="88.20" y="239.70" width="2.10" height="1.3" fill="#5c5c5c"/><rect x="91.35" y="239.70" width="6.30" height="1.3" fill="#5c5c5c"/><rect x="98.70" y="239.70" width="3.15" height="1.3" fill="#5c5c5c"/><rect x="102.90" y="239.70" width="3.15" height="1.3" fill="#5c5c5c"/><rect x="107.10" y="239.70" width="4.20" height="1.3" fill="#5c5c5c"/><rect x="4.20" y="244.90" width="10.50" height="1.3" fill="#3c78a8"/><rect x="15.75" y="244.90" width="2.10" height="1.3" fill="#5c5c5c"/><rect x="18.90" y="244.90" width="2.10" height="1.3" fill="#5c5c5c"/><rect x="22.05" y="244.90" width="1.05" height="1.3" fill="#5c5c5c"/><rect x="8.40" y="247.50" width="5.25" height="1.3" fill="#6a5a78"/><rect x="14.70" y="247.50" width="8.40" height="1.3" fill="#5c5c5c"/><rect x="24.15" y="247.50" width="1.05" height="1.3" fill="#5c5c5c"/><rect x="26.25" y="247.50" width="3.15" height="1.3" fill="#6a5a78"/><rect x="30.45" y="247.50" width="22.05" height="1.3" fill="#3d7f78"/><rect x="12.60" y="250.10" width="9.45" height="1.3" fill="#5c5c5c"/><rect x="23.10" y="250.10" width="2.10" height="1.3" fill="#5c5c5c"/><rect x="26.25" y="250.10" width="1.05" height="1.3" fill="#5c5c5c"/><rect x="16.80" y="252.70" width="16.80" height="1.3" fill="#3c78a8"/><rect x="34.65" y="252.70" width="5.25" height="1.3" fill="#5c5c5c"/><rect x="40.95" y="252.70" width="2.10" height="1.3" fill="#5c5c5c"/><rect x="44.10" y="252.70" width="1.05" height="1.3" fill="#5c5c5c"/><rect x="21.00" y="255.30" width="2.10" height="1.3" fill="#6a5a78"/><rect x="24.15" y="255.30" width="23.10" height="1.3" fill="#3c78a8"/><rect x="48.30" y="255.30" width="1.05" height="1.3" fill="#5c5c5c"/><rect x="25.20" y="257.90" width="18.90" height="1.3" fill="#3c78a8"/><rect x="21.00" y="260.50" width="1.05" height="1.3" fill="#5c5c5c"/><rect x="16.80" y="263.10" width="2.10" height="1.3" fill="#5c5c5c"/><rect x="12.60" y="265.70" width="2.10" height="1.3" fill="#5c5c5c"/><rect x="12.60" y="268.30" width="1.05" height="1.3" fill="#5c5c5c"/><rect x="14.70" y="268.30" width="10.50" height="1.3" fill="#5c5c5c"/><rect x="26.25" y="268.30" width="3.15" height="1.3" fill="#3c78a8"/><rect x="30.45" y="268.30" width="1.05" height="1.3" fill="#5c5c5c"/><rect x="8.40" y="270.90" width="1.05" height="1.3" fill="#5c5c5c"/><rect x="8.40" y="276.10" width="2.10" height="1.3" fill="#6a5a78"/><rect x="11.55" y="276.10" width="19.95" height="1.3" fill="#3c78a8"/><rect x="32.55" y="276.10" width="1.05" height="1.3" fill="#5c5c5c"/><rect x="12.60" y="278.70" width="37.80" height="1.3" fill="#3c78a8"/><rect x="51.45" y="278.70" width="2.10" height="1.3" fill="#4f6a48"/><rect x="54.60" y="278.70" width="7.35" height="1.3" fill="#3d7f78"/><rect x="63.00" y="278.70" width="3.15" height="1.3" fill="#5c5c5c"/><rect x="67.20" y="278.70" width="6.30" height="1.3" fill="#5c5c5c"/><rect x="8.40" y="281.30" width="1.05" height="1.3" fill="#5c5c5c"/><rect x="8.40" y="283.90" width="6.30" height="1.3" fill="#6a5a78"/><rect x="15.75" y="283.90" width="2.10" height="1.3" fill="#5c5c5c"/><rect x="18.90" y="283.90" width="2.10" height="1.3" fill="#5c5c5c"/><rect x="22.05" y="283.90" width="1.05" height="1.3" fill="#5c5c5c"/><rect x="12.60" y="286.50" width="2.10" height="1.3" fill="#6a5a78"/><rect x="15.75" y="286.50" width="19.95" height="1.3" fill="#3c78a8"/><rect x="36.75" y="286.50" width="1.05" height="1.3" fill="#5c5c5c"/><rect x="16.80" y="289.10" width="39.90" height="1.3" fill="#3c78a8"/><rect x="12.60" y="291.70" width="1.05" height="1.3" fill="#5c5c5c"/><rect x="8.40" y="294.30" width="2.10" height="1.3" fill="#5c5c5c"/><rect x="4.20" y="296.90" width="2.10" height="1.3" fill="#5c5c5c"/><rect x="7.35" y="296.90" width="11.55" height="1.3" fill="#5c5c5c"/><rect x="4.20" y="302.10" width="7.35" height="1.3" fill="#5c5c5c"/><rect x="8.40" y="304.70" width="15.75" height="1.3" fill="#3c78a8"/><rect x="25.20" y="304.70" width="9.45" height="1.3" fill="#5c5c5c"/><rect x="35.70" y="304.70" width="24.15" height="1.3" fill="#3c78a8"/><rect x="60.90" y="304.70" width="18.90" height="1.3" fill="#3c78a8"/><rect x="80.85" y="304.70" width="17.85" height="1.3" fill="#5c5c5c"/><rect x="99.75" y="304.70" width="17.85" height="1.3" fill="#3c78a8"/><rect x="118.65" y="304.70" width="1.05" height="1.3" fill="#5c5c5c"/><rect x="120.75" y="304.70" width="6.30" height="1.3" fill="#7a6050"/><rect x="128.10" y="304.70" width="1.05" height="1.3" fill="#5c5c5c"/><rect x="130.20" y="304.70" width="10.50" height="1.3" fill="#7a6050"/><rect x="12.60" y="307.30" width="4.20" height="1.3" fill="#5c5c5c"/><rect x="17.85" y="307.30" width="29.40" height="1.3" fill="#3c78a8"/><rect x="48.30" y="307.30" width="16.80" height="1.3" fill="#3c78a8"/><rect x="16.80" y="309.90" width="24.15" height="1.3" fill="#3c78a8"/><rect x="42.00" y="309.90" width="2.10" height="1.3" fill="#5c5c5c"/><rect x="45.15" y="309.90" width="2.10" height="1.3" fill="#5c5c5c"/><rect x="48.30" y="309.90" width="1.05" height="1.3" fill="#5c5c5c"/><rect x="21.00" y="312.50" width="11.55" height="1.3" fill="#3c78a8"/><rect x="25.20" y="315.10" width="7.35" height="1.3" fill="#5c5c5c"/><rect x="25.20" y="317.70" width="35.70" height="1.3" fill="#3c78a8"/><rect x="25.20" y="320.30" width="8.40" height="1.3" fill="#5c5c5c"/><rect x="34.65" y="320.30" width="6.30" height="1.3" fill="#5c5c5c"/><rect x="42.00" y="320.30" width="13.65" height="1.3" fill="#3c78a8"/><rect x="56.70" y="320.30" width="2.10" height="1.3" fill="#5c5c5c"/><rect x="21.00" y="322.90" width="1.05" height="1.3" fill="#5c5c5c"/><rect x="25.20" y="325.50" width="4.20" height="1.3" fill="#5c5c5c"/><rect x="30.45" y="325.50" width="35.70" height="1.3" fill="#3c78a8"/><rect x="29.40" y="328.10" width="6.30" height="1.3" fill="#5c5c5c"/><rect x="33.60" y="330.70" width="17.85" height="1.3" fill="#3c78a8"/><rect x="33.60" y="333.30" width="4.20" height="1.3" fill="#5c5c5c"/><rect x="33.60" y="335.90" width="11.55" height="1.3" fill="#5c5c5c"/><rect x="33.60" y="338.50" width="18.90" height="1.3" fill="#5c5c5c"/><rect x="29.40" y="341.10" width="2.10" height="1.3" fill="#5c5c5c"/><rect x="25.20" y="343.70" width="6.30" height="1.3" fill="#5c5c5c"/><rect x="21.00" y="346.30" width="13.65" height="1.3" fill="#3c78a8"/><rect x="16.80" y="348.90" width="3.15" height="1.3" fill="#5c5c5c"/><rect x="12.60" y="351.50" width="6.30" height="1.3" fill="#5c5c5c"/><rect x="12.60" y="354.10" width="4.20" height="1.3" fill="#5c5c5c"/><rect x="17.85" y="354.10" width="25.20" height="1.3" fill="#3c78a8"/><rect x="16.80" y="356.70" width="3.15" height="1.3" fill="#5c5c5c"/><rect x="21.00" y="359.30" width="4.20" height="1.3" fill="#5c5c5c"/><rect x="21.00" y="361.90" width="4.20" height="1.3" fill="#5c5c5c"/><rect x="21.00" y="364.50" width="19.95" height="1.3" fill="#3c78a8"/><rect x="42.00" y="364.50" width="3.15" height="1.3" fill="#5c5c5c"/><rect x="46.20" y="364.50" width="19.95" height="1.3" fill="#3c78a8"/><rect x="16.80" y="367.10" width="4.20" height="1.3" fill="#5c5c5c"/><rect x="16.80" y="369.70" width="2.10" height="1.3" fill="#5c5c5c"/><rect x="19.95" y="369.70" width="36.75" height="1.3" fill="#3c78a8"/><rect x="12.60" y="372.30" width="6.30" height="1.3" fill="#5c5c5c"/><rect x="8.40" y="374.90" width="17.85" height="1.3" fill="#3c78a8"/><rect x="4.20" y="377.50" width="1.05" height="1.3" fill="#5c5c5c"/><rect x="0.00" y="380.10" width="1.05" height="1.3" fill="#5c5c5c"/></g></svg>
<div class="a" style="left:1710.5px;top:109.7px;width:1px;height:718px;background:#191919"></div>
<div class="a" style="left:1711px;top:536.3px;width:17px;height:91.7px;background:rgba(121,121,121,.4)"></div>
<div class="a" style="left:1711px;top:560px;width:17px;height:2px;background:#a0a0a0"></div>
<div class="a" style="left:1716px;top:530px;width:6px;height:6px;background:#a0a0a0"></div>
<div class="a" style="left:1716px;top:557px;width:6px;height:6px;background:#a0a0a0"></div>
<div class="r" style="left:503.2px;top:835.7px;height:26px;line-height:26px;font-size:13.2px;color:#9d9d9d;">COMMENTS</div>
<div class="r" style="left:610.3px;top:835.7px;height:26px;line-height:26px;font-size:13.2px;color:#e7e7e7;">TERMINAL</div>
<div class="a" style="left:607px;top:860.5px;width:72px;height:1.5px;background:#0078d4"></div>
<div class="r" style="left:705.4px;top:835.7px;height:26px;line-height:26px;font-size:13.2px;color:#9d9d9d;letter-spacing:-0.3px">PROBLEMS</div>
<div class="a" style="left:788.3px;top:837px;width:22px;height:22px;background:#616161;border-radius:50%"></div>
<div class="r" style="left:788.3px;top:837.7px;height:22px;line-height:22px;font-size:13.2px;color:#ffffff;width:22px;text-align:center;font-weight:bold">5</div>
<div class="r" style="left:837px;top:835.7px;height:26px;line-height:26px;font-size:13.2px;color:#9d9d9d;">PORTS</div>
<div class="r" style="left:910.3px;top:835.7px;height:26px;line-height:26px;font-size:13.2px;color:#9d9d9d;letter-spacing:-0.3px">OUTPUT</div>
<div class="r" style="left:994.3px;top:835.7px;height:26px;line-height:26px;font-size:13.2px;color:#9d9d9d;letter-spacing:-0.1px">DEBUG CONSOLE</div>
<svg style="left:1417px;top:838.5px" width="19" height="18" viewBox="0 0 19 18"><rect x="1" y="1" width="16.5" height="16" rx="1.5" stroke="#cccccc" stroke-width="1.3"/><path d="M4.2 5l3.5 3.5-3.5 3.5M9 12.5h5" stroke="#cccccc" stroke-width="1.3"/></svg>
<div class="r" style="left:1441.1px;top:835.7px;height:26px;line-height:26px;font-size:15.6px;color:#cccccc;letter-spacing:-0.55px">volta-shim</div>
<svg style="left:1519px;top:840px" width="17" height="17" viewBox="0 0 17 17"><path d="M8.5 0.5v16M0.5 8.5h16" stroke="#cccccc" stroke-width="1.4"/></svg>
<svg style="left:1543px;top:845px" width="11" height="7" viewBox="0 0 11 7"><path d="M1 1l4.5 4.5L10 1" stroke="#cccccc" stroke-width="1.2"/></svg>
<svg style="left:1567px;top:839px" width="18" height="18" viewBox="0 0 18 18"><rect x="1" y="1" width="15.5" height="15.5" rx="1.5" stroke="#cccccc" stroke-width="1.3"/><path d="M8.7 1v15.5" stroke="#cccccc" stroke-width="1.3"/></svg>
<svg style="left:1598px;top:838px" width="16" height="19" viewBox="0 0 16 19"><path d="M1 4h14M5.5 4V1.5h5V4M2.8 4l.9 13.5h8.6L13.2 4M6.2 7v8M9.8 7v8" stroke="#cccccc" stroke-width="1.3"/></svg>
<div class="a" style="left:1630.8px;top:847px;width:2.4px;height:2.4px;background:#cccccc;border-radius:50%"></div>
<div class="a" style="left:1636.8px;top:847px;width:2.4px;height:2.4px;background:#cccccc;border-radius:50%"></div>
<div class="a" style="left:1642.8px;top:847px;width:2.4px;height:2.4px;background:#cccccc;border-radius:50%"></div>
<svg style="left:1661px;top:842px" width="16" height="10" viewBox="0 0 16 10"><path d="M1 8.5L8 1.5l7 7" stroke="#cccccc" stroke-width="1.3"/></svg>
<svg style="left:1694px;top:841.5px" width="13" height="13" viewBox="0 0 13 13"><path d="M1 1l11 11M12 1L1 12" stroke="#cccccc" stroke-width="1.4"/></svg>
<div class="r m" style="left:503.2px;top:881.63px;height:17px;line-height:17px;font-size:14.15px;color:#cccccc">d/webpack/loaders/postcss-loader/src/index.js??ruleSet[1].rules[6].oneOf[10].use[2]!./node_modules/next/dist/build/webpack/loaders/resolve-ur</div>
<div class="r m" style="left:503.2px;top:898.63px;height:17px;line-height:17px;font-size:14.15px;color:#cccccc">l-loader/index.js??ruleSet[1].rules[6].oneOf[10].use[3]!./node_modules/next/dist/compiled/sass-loader/cjs.js??ruleSet[1].rules[6].oneOf[10].u</div>
<div class="r m" style="left:503.2px;top:915.63px;height:17px;line-height:17px;font-size:14.15px;color:#cccccc">se[4]!./src/components/Footer/style.module.scss</div>
<div class="r m" style="left:503.2px;top:932.63px;height:17px;line-height:17px;font-size:14.15px;color:#cccccc">Warning</div>
<div class="r m" style="left:503.2px;top:966.63px;height:17px;line-height:17px;font-size:14.15px;color:#cccccc">(100:3) autoprefixer: start value has mixed support, consider using flex-start instead</div>
<div class="r m" style="left:503.2px;top:1000.63px;height:17px;line-height:17px;font-size:14.15px;color:#cccccc">Import trace for requested module:</div>
<div class="r m" style="left:503.2px;top:1017.63px;height:17px;line-height:17px;font-size:14.15px;color:#cccccc">./node_modules/next/dist/build/webpack/loaders/css-loader/src/index.js??ruleSet[1].rules[6].oneOf[10].use[1]!./node_modules/next/dist/build/w</div>
<div class="r m" style="left:503.2px;top:1034.63px;height:17px;line-height:17px;font-size:14.15px;color:#cccccc">ebpack/loaders/postcss-loader/src/index.js??ruleSet[1].rules[6].oneOf[10].use[2]!./node_modules/next/dist/build/webpack/loaders/resolve-url-l</div>
<div class="a" style="left:0px;top:1054px;width:41.1px;height:26px;background:#0078d4"></div>
<svg style="left:14px;top:1057px" width="14" height="20" viewBox="0 0 14 20"><path d="M1.5 7l4.5 4.5-4.5 4.5M12 2.5L7.5 7l4.5 4.5" stroke="#ffffff" stroke-width="1.3"/></svg>
<svg style="left:49px;top:1057px" width="16" height="19" viewBox="0 0 16 19"><circle cx="3.5" cy="3.5" r="2.4" stroke="#cccccc" stroke-width="1.2"/><circle cx="3.5" cy="15.5" r="2.4" stroke="#cccccc" stroke-width="1.2"/><circle cx="12.5" cy="6.5" r="2.4" stroke="#cccccc" stroke-width="1.2"/><path d="M3.5 5.9v7.2M12.5 8.9c0 3-4 3.5-8 4.5" stroke="#cccccc" stroke-width="1.2"/></svg>
<div class="r" style="left:69.3px;top:1053.0px;height:26px;line-height:26px;font-size:15.4px;color:#cccccc;letter-spacing:-0.1px">main*</div>
<svg style="left:115px;top:1058px" width="18" height="17" viewBox="0 0 18 17"><path d="M2.5 8.5a6.5 6.5 0 0 1 11.5-4M15.5 8.5a6.5 6.5 0 0 1-11.5 4M14.5 1v4h-4M3.5 16v-4h4" stroke="#cccccc" stroke-width="1.3"/></svg>
<svg style="left:149.5px;top:1059px" width="16" height="16" viewBox="0 0 16 16"><circle cx="7.8" cy="7.8" r="6.8" stroke="#cccccc" stroke-width="1.2"/><path d="M5 5l5.6 5.6M10.6 5L5 10.6" stroke="#cccccc" stroke-width="1.2"/></svg>
<div class="r" style="left:169.8px;top:1053.0px;height:26px;line-height:26px;font-size:15.4px;color:#cccccc;">0</div>
<svg style="left:183.5px;top:1058.5px" width="16" height="16" viewBox="0 0 16 16"><path d="M8 1.2L15 14.5H1z" stroke="#cccccc" stroke-width="1.2" stroke-linejoin="round"/><path d="M8 6v4.3M8 11.6v1.3" stroke="#cccccc" stroke-width="1.3"/></svg>
<div class="r" style="left:204.5px;top:1053.0px;height:26px;line-height:26px;font-size:15.4px;color:#cccccc;">5</div>
<svg style="left:233.5px;top:1058px" width="15" height="17" viewBox="0 0 15 17"><circle cx="7.5" cy="6" r="1.5" stroke="#cccccc" stroke-width="1.1"/><path d="M7.5 7.5L4 16M7.5 7.5l3.5 8.5M5 13h5M4.3 2.5a5 5 0 0 0 0 7M10.7 2.5a5 5 0 0 1 0 7M2 .8a8 8 0 0 0 0 10.5M13 .8a8 8 0 0 1 0 10.5" stroke="#cccccc" stroke-width="1.1"/></svg>
<div class="r" style="left:253px;top:1053.0px;height:26px;line-height:26px;font-size:15.4px;color:#cccccc;">0</div>
<div class="r" style="left:1121.9px;top:1053.0px;height:26px;line-height:26px;font-size:15.4px;color:#cccccc;">Ln 138, Col 10</div>
<div class="r" style="left:1242.2px;top:1053.0px;height:26px;line-height:26px;font-size:15.4px;color:#cccccc;">Spaces: 4</div>
<div class="r" style="left:1328px;top:1053.0px;height:26px;line-height:26px;font-size:15.4px;color:#cccccc;">UTF-8</div>
<div class="r" style="left:1391.7px;top:1053.0px;height:26px;line-height:26px;font-size:15.4px;color:#cccccc;">LF</div>
<div class="r" style="left:1424px;top:1053.0px;height:26px;line-height:26px;font-size:15.4px;color:#cccccc;">{</div>
<svg style="left:1430px;top:1063px" width="12" height="12" viewBox="0 0 12 12"><circle cx="5.5" cy="6" r="3.2" stroke="#cccccc" stroke-width="1.1"/><circle cx="5.5" cy="6" r="1" fill="#cccccc"/></svg>
<div class="r" style="left:1448.2px;top:1053.0px;height:26px;line-height:26px;font-size:15.4px;color:#cccccc;letter-spacing:-0.25px">JavaScript JSX</div>
<svg style="left:1566px;top:1058px" width="20" height="17" viewBox="0 0 20 17"><path d="M3 7.5C2 4 3.5 1.5 6.5 1.5c1.5 0 3 .8 3.5 2 .5-1.2 2-2 3.5-2 3 0 4.5 2.5 3.5 6M2 8.5c0 5 3.5 7 8 7s8-2 8-7" stroke="#cccccc" stroke-width="1.4"/><path d="M7.5 10v2.5M12.5 10v2.5" stroke="#cccccc" stroke-width="1.5"/></svg>
<svg style="left:1602px;top:1059px" width="19" height="14" viewBox="0 0 19 14"><path d="M1 8l3.5 4L14 1.5M8.5 10.5l1.5 1.5L18 2" stroke="#cccccc" stroke-width="1.2"/></svg>
<div class="r" style="left:1623.9px;top:1053.0px;height:26px;line-height:26px;font-size:15.4px;color:#cccccc;">Prettier</div>
<svg style="left:1694px;top:1058px" width="15" height="17" viewBox="0 0 15 17"><path d="M7.5 1.5a4.5 4.5 0 0 0-4.5 4.5v4L1.5 13h12L12 10V6a4.5 4.5 0 0 0-4.5-4.5zM5.5 15a2 2 0 0 0 4 0" stroke="#cccccc" stroke-width="1.2" stroke-linejoin="round"/></svg>
<div class="a" style="left:58px;top:109.7px;width:420px;height:3.5px;background:linear-gradient(rgba(0,0,0,.35),rgba(0,0,0,0))"></div>
</body></html>
